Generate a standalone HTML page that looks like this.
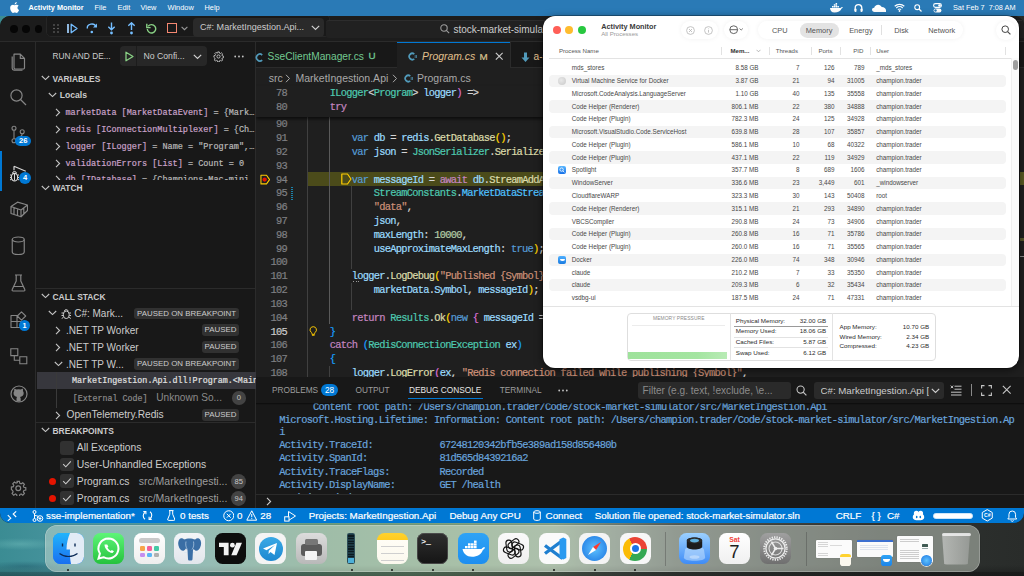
<!DOCTYPE html>
<html><head><meta charset="utf-8">
<style>
*{margin:0;padding:0;box-sizing:border-box}
html,body{width:1024px;height:576px;overflow:hidden;background:#3a4a48;font-family:"Liberation Sans",sans-serif}
.a{position:absolute}
.mono{font-family:"Liberation Mono",monospace;-webkit-text-stroke:0.2px}
.nw{white-space:nowrap}
#desk{left:0;top:0;width:1024px;height:576px;background:radial-gradient(ellipse 40px 6px at 20px 544px,rgba(130,205,200,.35),rgba(130,205,200,0)),radial-gradient(ellipse 45px 5px at 25px 566px,rgba(20,70,90,.35),rgba(20,70,90,0)),linear-gradient(180deg,rgba(0,0,0,0) 0,rgba(0,0,0,0) 565px,rgba(0,0,0,.3) 576px),linear-gradient(90deg,#3b8c93 0%,#4a95a0 8%,#5a9a98 20%,#6c9c80 32%,#7da080 45%,#86a086 54%,#6f7e73 60%,#545c57 66%,#414643 75%,#2f3331 86%,#292c2a 100%)}
#menubar{left:0;top:0;width:1024px;height:16px;background:#2a7ab6;color:#fff;font-size:8.6px;font-weight:bold}
#vsc{left:0;top:16.2px;width:1023.5px;height:507.1px;background:#181818;border-radius:10px;overflow:hidden}
#title{left:0;top:0;width:1024px;height:26px;background:#1c1c1c;border-bottom:1px solid #2b2b2b}
#act{left:0;top:26px;width:36px;height:466px;background:#181818;border-right:1px solid #2b2b2b}
#side{left:36px;top:26px;width:220px;height:466px;background:#181818;border-right:1px solid #2b2b2b}
#tabs{left:256px;top:26px;width:768px;height:26px;background:#181818;border-bottom:1px solid #2b2b2b}
#editor{left:256px;top:52px;width:768px;height:308.5px;background:#1f1f1f;overflow:hidden}
#panel{left:256px;top:360.5px;width:768px;height:131.2px;background:#181818;overflow:hidden}
#status{left:0;top:491.7px;width:1024px;height:15.6px;background:#0078d4;color:#fff}
#am{left:543.2px;top:16.2px;width:476.3px;height:351.6px;background:#fff;border-radius:12px;overflow:hidden;box-shadow:0 0 0 .5px rgba(0,0,0,.6),0 2px 8px rgba(0,0,0,.55)}
#dock{left:44.5px;top:525px;width:935px;height:46.5px;border-radius:12px;background:rgba(222,230,218,.45);box-shadow:inset 0 0 0 .7px rgba(255,255,255,.3),0 0 0 .5px rgba(0,0,0,.1)}

</style></head><body>
<div id="desk" class="a"></div>
<div class="a" style="left:0;top:571.5px;width:1024px;height:5px;background:linear-gradient(90deg,rgba(20,50,55,.25) 0%,rgba(40,55,45,.35) 40%,rgba(25,28,26,.55) 58%,rgba(20,20,20,.5) 100%)"></div>
<div id="menubar" class="a">
  <svg class="a" style="left:10px;top:2px" width="9" height="11" viewBox="0 0 17 20"><path fill="#fff" d="M14.1 10.6c0-2.6 2.1-3.8 2.2-3.9-1.2-1.8-3.1-2-3.7-2-1.6-.2-3.1.9-3.9.9-.8 0-2-.9-3.3-.9C3.7 4.8 2.1 5.8 1.2 7.300-.6 10.400.7 15 2.500 17.600c.9 1.300 1.900 2.700 3.300 2.600 1.300-.1 1.800-.8 3.400-.8s2 .8 3.400.8c1.400 0 2.300-1.300 3.100-2.600 1-1.500 1.400-2.900 1.400-3-.1 0-2.900-1.100-3-4zM11.600 3c.7-.9 1.200-2.100 1.100-3.300-1 .1-2.300.7-3 1.600-.7.800-1.200 2-1.100 3.200 1.100.1 2.300-.6 3-1.500z"/></svg>
  <div class="a nw" style="left:28.5px;top:3px;font-size:7.3px;font-weight:bold">Activity Monitor</div>
  <div class="a nw" style="left:94.5px;top:3px;font-size:7.4px;font-weight:normal">File</div>
  <div class="a nw" style="left:117.5px;top:3px;font-size:7.4px;font-weight:normal">Edit</div>
  <div class="a nw" style="left:140.5px;top:3px;font-size:7.4px;font-weight:normal">View</div>
  <div class="a nw" style="left:167.5px;top:3px;font-size:7.4px;font-weight:normal">Window</div>
  <div class="a nw" style="left:204.5px;top:3px;font-size:7.4px;font-weight:normal">Help</div>
  <svg class="a" style="left:829px;top:3px" width="14" height="10" viewBox="0 0 14 10"><path fill="#fff" d="M1 5h10.5c.6-.9 1.600-1.200 2.300-1-.1.8-.6 1.300-1.200 1.500C11.600 8.300 9 9.600 5.500 9.600 2.500 9.600 1.200 7.600 1 5zM3 3h1.5v1.5H3zM4.8 3h1.5v1.5H4.8zM6.6 3h1.5v1.5H6.6zM4.8 1.2h1.5v1.5H4.8zM6.6 1.2h1.5v1.5H6.6zM6.6 -.6h1.5V1H6.6zM8.4 3h1.5v1.5H8.4z"/></svg>
  <svg class="a" style="left:854px;top:3px" width="9" height="10" viewBox="0 0 9 10"><path fill="none" stroke="#fff" stroke-width="1.3" d="M1.2 8V5a3.3 3.3 0 0 1 6.6 0v3"/><rect x="0.5" y="5.5" width="2" height="3.5" rx=".8" fill="#fff"/><rect x="6.5" y="5.5" width="2" height="3.5" rx=".8" fill="#fff"/></svg>
  <svg class="a" style="left:872px;top:4px" width="14" height="8" viewBox="0 0 14 8"><path fill="#fff" d="M2.5 8C1 8 0 7 0 5.8 0 4.600 1 3.700 2.200 3.800 2.600 2 4.200.7 6.200.7c1.600 0 3 1 3.500 2.400C11.900 3 14 4.500 14 6.300V8z"/></svg>
  <svg class="a" style="left:894px;top:3px" width="11" height="9" viewBox="0 0 11 9"><path fill="none" stroke="#fff" stroke-width="1.2" d="M.7 3.300a7 7 0 0 1 9.600 0M2.300 5a4.600 4.600 0 0 1 6.400 0M3.900 6.700a2.200 2.200 0 0 1 3.200 0"/><circle cx="5.5" cy="8" r=".9" fill="#fff"/></svg>
  <svg class="a" style="left:914px;top:4px" width="8" height="8" viewBox="0 0 8 8"><circle cx="3.2" cy="3.2" r="2.4" fill="none" stroke="#fff" stroke-width="1.1"/><path d="M5 5l2.500 2.500" stroke="#fff" stroke-width="1.2"/></svg>
  <svg class="a" style="left:933px;top:3px" width="9" height="10" viewBox="0 0 9 10"><rect x=".6" y=".6" width="7.8" height="3.800" rx="1.900" fill="none" stroke="#fff" stroke-width="1.100"/><circle cx="6.500" cy="2.500" r="1.300" fill="#fff"/><rect x=".6" y="5.600" width="7.800" height="3.800" rx="1.900" fill="#fff"/><circle cx="2.500" cy="7.500" r="1.200" fill="#2a7ab6"/></svg>
  <div class="a nw" style="left:953px;top:3px;font-size:7.3px;font-weight:normal">Sat Feb 7&nbsp;&nbsp;7:08 AM</div>
</div>

<div id="vsc" class="a">
<div id="title" class="a">
  <div class="a" style="left:9.8px;top:9.2px;width:7.8px;height:7.8px;border-radius:50%;background:#060606"></div>
  <div class="a" style="left:22px;top:9.2px;width:7.8px;height:7.8px;border-radius:50%;background:#060606"></div>
  <div class="a" style="left:34.5px;top:9.2px;width:7.8px;height:7.8px;border-radius:50%;background:#060606"></div>
  <div class="a" style="left:46px;top:-2px;width:284px;height:23px;border-radius:5px;background:#191919;border:1px solid #262626"></div>
  <svg class="a" style="left:53px;top:8px" width="6" height="9" viewBox="0 0 6 9"><g fill="#8a8a8a"><circle cx="1" cy="1" r=".7"/><circle cx="5" cy="1" r=".7"/><circle cx="1" cy="4.5" r=".7"/><circle cx="5" cy="4.5" r=".7"/><circle cx="1" cy="8" r=".7"/><circle cx="5" cy="8" r=".7"/></g></svg>
  <svg class="a" style="left:66px;top:6.5px" width="12" height="11" viewBox="0 0 12 11"><rect x="1" y="1" width="2" height="9" fill="#8fb8df"/><path d="M5.2 1.2v8.6L11 5.5z" fill="none" stroke="#75beff" stroke-width="1.3" stroke-linejoin="round"/></svg>
  <svg class="a" style="left:86px;top:6px" width="12" height="12" viewBox="0 0 12 12"><path d="M1.3 6.5a4.5 4 0 0 1 8.700-1.800" fill="none" stroke="#75beff" stroke-width="1.4"/><path d="M11 1.5v4H7z" fill="#75beff"/><circle cx="5.8" cy="10" r="1.3" fill="#75beff"/></svg>
  <svg class="a" style="left:107px;top:5.5px" width="9" height="13" viewBox="0 0 9 13"><path d="M4.5 .5v7M1.300 4.800l3.200 3 3.200-3" fill="none" stroke="#75beff" stroke-width="1.4"/><circle cx="4.5" cy="11" r="1.4" fill="#75beff"/></svg>
  <svg class="a" style="left:127px;top:5.5px" width="9" height="13" viewBox="0 0 9 13"><path d="M4.5 8V1M1.300 3.800l3.200-3 3.200 3" fill="none" stroke="#75beff" stroke-width="1.4"/><circle cx="4.5" cy="11" r="1.4" fill="#75beff"/></svg>
  <svg class="a" style="left:145.5px;top:6.5px" width="11" height="11" viewBox="0 0 11 11"><path d="M2.200 3.200A4.200 4.200 0 1 1 1.300 6" fill="none" stroke="#89d185" stroke-width="1.4"/><path d="M.8 .8v3.800h3.800" fill="none" stroke="#89d185" stroke-width="1.4"/></svg>
  <div class="a" style="left:167px;top:7px;width:9.5px;height:9.5px;border:1.4px solid #f48771"></div>
  <svg class="a" style="left:180.5px;top:10px" width="7" height="5" viewBox="0 0 7 5"><path d="M.6 .8l2.900 2.900L6.400 .8" fill="none" stroke="#9a9a9a" stroke-width="1.1"/></svg>
  <div class="a" style="left:193px;top:2px;width:131px;height:18.5px;border-radius:4px;background:#2a2a2a"></div>
  <div class="a nw" style="left:200px;top:6px;font-size:9.05px;color:#cccccc">C#: MarketIngestion.Api...</div>
  <svg class="a" style="left:310.5px;top:8.5px" width="9" height="6" viewBox="0 0 9 6"><path d="M.8 .8l3.700 3.700L8.200 .8" fill="none" stroke="#cccccc" stroke-width="1.2"/></svg>
  
  <div class="a" style="left:326px;top:3.8px;width:700px;height:18.2px;background:#212121;border-top:1px solid #2d2d2d;border-radius:3px 0 0 3px"></div>
  <svg class="a" style="left:439.5px;top:7.5px" width="10" height="10" viewBox="0 0 10 10"><circle cx="4" cy="4" r="3.200" fill="none" stroke="#9d9d9d" stroke-width="1.1"/><path d="M6.300 6.300L9.200 9.200" stroke="#9d9d9d" stroke-width="1.1"/></svg>
  <div class="a nw" style="left:453.5px;top:7.4px;font-size:10px;color:#cccccc">stock-market-simulator</div>
</div>
  <div id="act" class="a">
  <svg class="a" style="left:10px;top:10px" width="17" height="19" viewBox="0 0 17 19"><path d="M4 2.2h6.300l4.200 4.200v9.300a1.300 1.300 0 0 1-1.300 1.300H5.300A1.300 1.300 0 0 1 4 15.700z M10.300 2.200v4.200h4.200" fill="none" stroke="#858585" stroke-width="1.2" stroke-linejoin="round"/><path d="M2.200 4.500v11.800a1.800 1.800 0 0 0 1.800 1.800h8.500" fill="none" stroke="#858585" stroke-width="1.2"/></svg>
  <svg class="a" style="left:9px;top:46px" width="18" height="18" viewBox="0 0 18 18"><circle cx="7.5" cy="7.5" r="5.600" fill="none" stroke="#858585" stroke-width="1.2"/><path d="M11.500 11.500l5.500 5.500" stroke="#858585" stroke-width="1.3"/></svg>
  <svg class="a" style="left:10px;top:82px" width="16" height="20" viewBox="0 0 16 20"><circle cx="4" cy="4.200" r="2" fill="none" stroke="#858585" stroke-width="1.1"/><circle cx="12.200" cy="7.700" r="2" fill="none" stroke="#858585" stroke-width="1.1"/><circle cx="4" cy="16.700" r="2" fill="none" stroke="#858585" stroke-width="1.1"/><path d="M4 6.200v8.500M12.200 9.700c0 3-3 4-7 5.500" fill="none" stroke="#858585" stroke-width="1.1"/></svg>
  <div class="a" style="left:15.3px;top:93.80000000000001px;width:16px;height:10.5px;border-radius:5.3px;background:#0078d4;color:#fff;font-size:7.6px;font-weight:bold;text-align:center;line-height:10.5px">26</div>
  <div class="a" style="left:0;top:108.5px;width:2px;height:40px;background:#0078d4"></div>
  <svg class="a" style="left:8.5px;top:122.5px" width="20" height="18" viewBox="0 0 20 18"><path d="M5 1.200v4M5 1.200l11.800 5" fill="none" stroke="#d7d7d7" stroke-width="1.2"/><ellipse cx="5.500" cy="12.200" rx="3.200" ry="3.800" fill="none" stroke="#d7d7d7" stroke-width="1.2"/><path d="M3.500 8.500a2 2 0 0 1 4 0M1 10h1.500M1 12.500h1.300M1 15l1.500-1M10 10H8.500M10 12.500H8.700M10 15l-1.500-1M5.500 9v6.500" fill="none" stroke="#d7d7d7" stroke-width="1"/></svg>
  <div class="a" style="left:19px;top:130.2px;width:12px;height:12px;border-radius:50%;background:#0078d4;color:#fff;font-size:7.6px;font-weight:bold;text-align:center;line-height:12px">4</div>
  <svg class="a" style="left:9.5px;top:158.5px" width="18.5" height="17" viewBox="0 0 18.500 17"><path d="M1 5.500L7.500 1.200 17.500 4 17.500 9.500 11 15.800 1 12.500z M1 5.500l10 3.500 6.500-5M11 9v6.800 M4 6.500v7 M7.500 7.700v7 M13.800 7v6.500" fill="none" stroke="#858585" stroke-width="1.2" stroke-linejoin="round"/></svg>
  <svg class="a" style="left:11px;top:194px" width="14.5" height="19.5" viewBox="0 0 14.500 19.500"><ellipse cx="7.250" cy="3.500" rx="6" ry="2.500" fill="none" stroke="#858585" stroke-width="1.200"/><path d="M1.250 3.500v12.500c0 1.400 2.700 2.500 6 2.500s6-1.100 6-2.500V3.500" fill="none" stroke="#858585" stroke-width="1.200"/></svg>
  <svg class="a" style="left:11px;top:231.5px" width="15" height="18" viewBox="0 0 15 18"><path d="M4 1h7M5.200 1v6L1.200 15.500a1 1 0 0 0 .9 1.500h10.800a1 1 0 0 0 .9-1.500L9.800 7V1M3 12.500h9" fill="none" stroke="#858585" stroke-width="1.200" stroke-linejoin="round"/></svg>
  <svg class="a" style="left:10px;top:269px" width="17" height="17" viewBox="0 0 17 17"><path d="M1 4.500h6v6H1z M1 10.500h6v6H1z M7 10.500h6v6H7z M11.500 .800l4.200 4.200-4.200 4.200-4.200-4.200z" fill="none" stroke="#858585" stroke-width="1.100" stroke-linejoin="round"/></svg>
  <div class="a" style="left:19px;top:278.3px;width:11px;height:11px;border-radius:50%;background:#0078d4;color:#fff;font-size:7.2px;font-weight:bold;text-align:center;line-height:11px">1</div>
  <svg class="a" style="left:10px;top:306px" width="17.5" height="17" viewBox="0 0 17.500 17"><path d="M.8 .8h7v6.800h-7z M9.800 8.800h7v7h-7z M4.300 7.600v4.700h5.500" fill="none" stroke="#858585" stroke-width="1.100"/></svg>
  <svg class="a" style="left:9.5px;top:342.5px" width="18" height="18" viewBox="0 0 18 18"><circle cx="9" cy="9" r="8" fill="none" stroke="#858585" stroke-width="1.200"/><path d="M6.500 16.500v-3c0-.8.3-1.300.7-1.600-2.200-.3-3.700-1.200-3.700-3.800 0-.9.300-1.600.8-2.200-.1-.3-.3-1.100.1-2.200 0 0 .7-.2 2.200.8a7.500 7.500 0 0 1 4 0c1.500-1 2.200-.8 2.200-.8.400 1.100.200 1.900.1 2.200.5.600.8 1.300.8 2.200 0 2.600-1.500 3.500-3.700 3.800.4.300.7.900.7 1.700v2.900" fill="#858585"/></svg>
  <svg class="a" style="left:10px;top:437.5px" width="16.5" height="16.5" viewBox="0 0 24 24"><path fill="none" stroke="#858585" stroke-width="1.700" d="M10.300 2h3.400l.6 2.800 1.900.8 2.400-1.600 2.400 2.400-1.600 2.400.8 1.900 2.800.6v3.400l-2.800.6-.8 1.900 1.600 2.400-2.400 2.400-2.400-1.600-1.900.8-.6 2.800h-3.400l-.6-2.800-1.900-.8-2.400 1.600-2.400-2.400 1.600-2.400-.8-1.900L2 13.700v-3.400l2.800-.6.8-1.900L4 5.400 6.400 3l2.400 1.600 1.900-.8z"/><circle cx="12" cy="12" r="3.500" fill="none" stroke="#858585" stroke-width="1.700"/></svg>
</div>
  <div id="side" class="a">
<div class="a nw" style="left:16.50px;top:9.26px;font-size:8.3px;color:#cccccc;">RUN AND DE...</div>
<div class="a" style="left:84.00px;top:4.00px;width:87px;height:20px;border-radius:4px;background:#272727"></div>
<div class="a" style="left:100.00px;top:4.00px;width:1px;height:20px;background:#1c1c1c"></div>
<svg class="a" style="left:88.50px;top:9.00px" width="9" height="11" viewBox="0 0 9 11"><path d="M1 1.2v8.6L8 5.5z" fill="none" stroke="#89d185" stroke-width="1.3" stroke-linejoin="round"/></svg>
<div class="a nw" style="left:107.50px;top:9.04px;font-size:8.7px;color:#cccccc;">No Confi...</div>
<svg class="a" style="left:156.50px;top:11.50px" width="9" height="6" viewBox="0 0 9 6"><path d="M.8 .8l3.7 3.7L8.2 .8" fill="none" stroke="#cccccc" stroke-width="1.2"/></svg>
<svg class="a" style="left:177.00px;top:8.50px" width="11" height="11" viewBox="0 0 24 24"><path fill="none" stroke="#c5c5c5" stroke-width="2" d="M10.3 2h3.4l.6 2.8 1.9.8 2.4-1.6 2.4 2.4-1.6 2.4.8 1.9 2.8.6v3.4l-2.8.6-.8 1.9 1.6 2.4-2.4 2.4-2.4-1.6-1.9.8-.6 2.8h-3.4l-.6-2.8-1.9-.8-2.4 1.6-2.4-2.4 1.6-2.4-.8-1.9L2 13.7v-3.4l2.8-.6.8-1.9L4 5.4 6.4 3l2.4 1.6 1.9-.8z"/><circle cx="12" cy="12" r="3.5" fill="none" stroke="#c5c5c5" stroke-width="2"/></svg>
<svg class="a" style="left:197.50px;top:13.00px" width="10" height="3" viewBox="0 0 10 3"><g fill="#c5c5c5"><circle cx="1.2" cy="1.5" r=".9"/><circle cx="5" cy="1.5" r=".9"/><circle cx="8.8" cy="1.5" r=".9"/></g></svg>
<svg class="a" style="left:5.00px;top:33.00px" width="9" height="6" viewBox="0 0 9 6"><path d="M.8 1l3.7 3.6L8.2 1" fill="none" stroke="#c5c5c5" stroke-width="1.1"/></svg>
<div class="a nw" style="left:16.50px;top:31.41px;font-size:8.4px;color:#cccccc;font-weight:bold">VARIABLES</div>
<svg class="a" style="left:12.00px;top:49.60px" width="9" height="6" viewBox="0 0 9 6"><path d="M.8 1l3.7 3.6L8.2 1" fill="none" stroke="#c5c5c5" stroke-width="1.1"/></svg>
<div class="a nw" style="left:23.80px;top:47.90px;font-size:8.6px;color:#cccccc;font-weight:bold">Locals</div>
<svg class="a" style="left:19.00px;top:66.20px" width="6" height="9" viewBox="0 0 6 9"><path d="M1 .8l3.6 3.7L1 8.2" fill="none" stroke="#c5c5c5" stroke-width="1.1"/></svg>
<div class="a nw mono" style="left:29.50px;top:66.10px;font-size:8.5px;color:#b8b8b8;"><span style="color:#c9a2c9">marketData [MarketDataEvent]</span> = {Mark…</div>
<svg class="a" style="left:19.00px;top:83.00px" width="6" height="9" viewBox="0 0 6 9"><path d="M1 .8l3.6 3.7L1 8.2" fill="none" stroke="#c5c5c5" stroke-width="1.1"/></svg>
<div class="a nw mono" style="left:29.50px;top:82.90px;font-size:8.5px;color:#b8b8b8;"><span style="color:#c9a2c9">redis [IConnectionMultiplexer]</span> = {Ch…</div>
<svg class="a" style="left:19.00px;top:99.80px" width="6" height="9" viewBox="0 0 6 9"><path d="M1 .8l3.6 3.7L1 8.2" fill="none" stroke="#c5c5c5" stroke-width="1.1"/></svg>
<div class="a nw mono" style="left:29.50px;top:99.70px;font-size:8.5px;color:#b8b8b8;"><span style="color:#c9a2c9">logger [ILogger]</span> = Name = "Program",…</div>
<svg class="a" style="left:19.00px;top:116.50px" width="6" height="9" viewBox="0 0 6 9"><path d="M1 .8l3.6 3.7L1 8.2" fill="none" stroke="#c5c5c5" stroke-width="1.1"/></svg>
<div class="a nw mono" style="left:29.50px;top:116.40px;font-size:8.5px;color:#b8b8b8;"><span style="color:#c9a2c9">validationErrors [List]</span> = Count = 0</div>
<svg class="a" style="left:19.00px;top:133.20px" width="6" height="9" viewBox="0 0 6 9"><path d="M1 .8l3.6 3.7L1 8.2" fill="none" stroke="#c5c5c5" stroke-width="1.1"/></svg>
<div class="a nw mono" style="left:29.50px;top:133.10px;font-size:8.5px;color:#b8b8b8;"><span style="color:#c9a2c9">db [IDatabase]</span> = {Champions-Mac-mini…</div>
<div class="a" style="left:0.00px;top:137.60px;width:219px;height:17px;background:#181818"></div>
<svg class="a" style="left:5.00px;top:142.50px" width="9" height="6" viewBox="0 0 9 6"><path d="M.8 1l3.7 3.6L8.2 1" fill="none" stroke="#c5c5c5" stroke-width="1.1"/></svg>
<div class="a nw" style="left:16.50px;top:140.91px;font-size:8.4px;color:#cccccc;font-weight:bold">WATCH</div>
<div class="a" style="left:0.00px;top:246.00px;width:220px;height:1px;background:#2b2b2b"></div>
<svg class="a" style="left:5.00px;top:251.20px" width="9" height="6" viewBox="0 0 9 6"><path d="M.8 1l3.7 3.6L8.2 1" fill="none" stroke="#c5c5c5" stroke-width="1.1"/></svg>
<div class="a nw" style="left:16.50px;top:249.58px;font-size:8.44px;color:#cccccc;font-weight:bold">CALL STACK</div>
<svg class="a" style="left:12.00px;top:268.30px" width="9" height="6" viewBox="0 0 9 6"><path d="M.8 1l3.7 3.6L8.2 1" fill="none" stroke="#c5c5c5" stroke-width="1.1"/></svg>
<svg class="a" style="left:24.50px;top:265.50px" width="10.5" height="11.5" viewBox="0 0 10.5 11.5"><ellipse cx="5.25" cy="6.8" rx="3" ry="3.8" fill="none" stroke="#cccccc" stroke-width="1"/><path d="M3.3 3.2a2 2 0 0 1 3.9 0M.5 5h1.8M.5 7.5h1.7M.7 10.5l1.7-1.2M10 5H8.2M10 7.5H8.3M9.8 10.5L8.1 9.3" fill="none" stroke="#cccccc" stroke-width="1"/></svg>
<div class="a nw" style="left:38.20px;top:265.83px;font-size:10px;color:#cccccc;">C#: Mark...</div>
<div class="a nw" style="left:98.20px;top:265.40px;width:104.8px;height:11.8px;border-radius:3px;background:#313131;color:#cccccc;font-size:7.9px;text-align:center;line-height:12.4px">PAUSED ON BREAKPOINT</div>
<svg class="a" style="left:19.00px;top:284.00px" width="6" height="9" viewBox="0 0 6 9"><path d="M1 .8l3.6 3.7L1 8.2" fill="none" stroke="#c5c5c5" stroke-width="1.1"/></svg>
<div class="a nw" style="left:30.00px;top:282.53px;font-size:10px;color:#cccccc;">.NET TP Worker</div>
<div class="a nw" style="left:166.00px;top:282.10px;width:37.0px;height:11.8px;border-radius:3px;background:#313131;color:#cccccc;font-size:7.9px;text-align:center;line-height:12.4px">PAUSED</div>
<svg class="a" style="left:19.00px;top:301.20px" width="6" height="9" viewBox="0 0 6 9"><path d="M1 .8l3.6 3.7L1 8.2" fill="none" stroke="#c5c5c5" stroke-width="1.1"/></svg>
<div class="a nw" style="left:30.00px;top:299.73px;font-size:10px;color:#cccccc;">.NET TP Worker</div>
<div class="a nw" style="left:166.00px;top:299.30px;width:37.0px;height:11.8px;border-radius:3px;background:#313131;color:#cccccc;font-size:7.9px;text-align:center;line-height:12.4px">PAUSED</div>
<svg class="a" style="left:17.50px;top:318.80px" width="9" height="6" viewBox="0 0 9 6"><path d="M.8 1l3.7 3.6L8.2 1" fill="none" stroke="#c5c5c5" stroke-width="1.1"/></svg>
<div class="a nw" style="left:30.00px;top:316.33px;font-size:10px;color:#cccccc;">.NET TP W...</div>
<div class="a nw" style="left:98.20px;top:315.90px;width:104.8px;height:11.8px;border-radius:3px;background:#313131;color:#cccccc;font-size:7.9px;text-align:center;line-height:12.4px">PAUSED ON BREAKPOINT</div>
<div class="a" style="left:1.00px;top:330.00px;width:219px;height:16.5px;background:#37373d"></div>
<div class="a" style="left:20.00px;top:330.00px;width:1px;height:36px;background:#3a3a3a"></div>
<div class="a nw mono" style="left:36.00px;top:334.26px;font-size:8.4px;color:#e0e0e0;">MarketIngestion.Api.dll!Program.&lt;Main&gt;$</div>
<div class="a nw mono" style="left:36.70px;top:351.32px;font-size:8.3px;color:#8b8b8b;">[External Code]</div>
<div class="a nw" style="left:120.30px;top:350.28px;font-size:10.1px;color:#8b8b8b;">Unknown So...</div>
<div class="a nw" style="left:196.00px;top:349.00px;width:13.6px;height:13.6px;border-radius:50%;background:#434343;color:#c8c8c8;font-size:7.6px;text-align:center;line-height:14.2px">0</div>
<svg class="a" style="left:19.00px;top:368.50px" width="6" height="9" viewBox="0 0 6 9"><path d="M1 .8l3.6 3.7L1 8.2" fill="none" stroke="#c5c5c5" stroke-width="1.1"/></svg>
<div class="a nw" style="left:30.50px;top:366.92px;font-size:10.2px;color:#cccccc;">OpenTelemetry.Redis</div>
<div class="a nw" style="left:166.00px;top:366.60px;width:37.0px;height:11.8px;border-radius:3px;background:#313131;color:#cccccc;font-size:7.9px;text-align:center;line-height:12.4px">PAUSED</div>
<div class="a" style="left:0.00px;top:379.50px;width:220px;height:1px;background:#2b2b2b"></div>
<svg class="a" style="left:5.00px;top:385.30px" width="9" height="6" viewBox="0 0 9 6"><path d="M.8 1l3.7 3.6L8.2 1" fill="none" stroke="#c5c5c5" stroke-width="1.1"/></svg>
<div class="a nw" style="left:16.50px;top:383.68px;font-size:8.44px;color:#cccccc;font-weight:bold">BREAKPOINTS</div>
<div class="a" style="left:24.00px;top:398.70px;width:13.8px;height:13.8px;border-radius:3px;background:#313131"></div>
<div class="a nw" style="left:40.80px;top:399.87px;font-size:10.3px;color:#cccccc;">All Exceptions</div>
<div class="a" style="left:24.00px;top:415.40px;width:13.8px;height:13.8px;border-radius:3px;background:#313131"></div>
<svg class="a" style="left:26.00px;top:417.20px" width="10" height="10" viewBox="0 0 10 10"><path d="M1.2 5.2l2.6 2.6L8.8 2.3" fill="none" stroke="#cccccc" stroke-width="1.1"/></svg>
<div class="a nw" style="left:40.80px;top:416.51px;font-size:10.4px;color:#cccccc;">User-Unhandled Exceptions</div>
<div class="a" style="left:13.00px;top:435.50px;width:7px;height:7px;border-radius:50%;background:#e51400"></div>
<div class="a" style="left:24.00px;top:432.20px;width:13.8px;height:13.8px;border-radius:3px;background:#313131"></div>
<svg class="a" style="left:26.00px;top:434.00px" width="10" height="10" viewBox="0 0 10 10"><path d="M1.2 5.2l2.6 2.6L8.8 2.3" fill="none" stroke="#cccccc" stroke-width="1.1"/></svg>
<div class="a nw" style="left:40.80px;top:433.37px;font-size:10.3px;color:#cccccc;">Program.cs</div>
<div class="a nw" style="left:102.70px;top:433.26px;font-size:10.5px;color:#9d9d9d;">src/MarketIngesti...</div>
<div class="a nw" style="left:195.40px;top:431.60px;width:14.8px;height:14.8px;border-radius:50%;background:#434343;color:#c8c8c8;font-size:7.6px;text-align:center;line-height:15.4px">85</div>
<div class="a" style="left:13.00px;top:452.50px;width:7px;height:7px;border-radius:50%;background:#e51400"></div>
<div class="a" style="left:24.00px;top:449.20px;width:13.8px;height:13.8px;border-radius:3px;background:#313131"></div>
<svg class="a" style="left:26.00px;top:451.00px" width="10" height="10" viewBox="0 0 10 10"><path d="M1.2 5.2l2.6 2.6L8.8 2.3" fill="none" stroke="#cccccc" stroke-width="1.1"/></svg>
<div class="a nw" style="left:40.80px;top:450.37px;font-size:10.3px;color:#cccccc;">Program.cs</div>
<div class="a nw" style="left:102.70px;top:450.26px;font-size:10.5px;color:#9d9d9d;">src/MarketIngesti...</div>
<div class="a nw" style="left:195.40px;top:448.60px;width:14.8px;height:14.8px;border-radius:50%;background:#434343;color:#c8c8c8;font-size:7.6px;text-align:center;line-height:15.4px">94</div>
</div>
<div id="tabs" class="a">
<svg class="a" style="left:-1.5px;top:10.5px" width="9" height="9" viewBox="0 0 9 9"><path d="M7.2 2A3.4 3.4 0 1 0 7.2 7" fill="none" stroke="#519aba" stroke-width="1.7"/></svg>
<div class="a nw" style="left:11.6px;top:8.9px;font-size:10.2px;color:#73c991">SseClientManager.cs</div>
<div class="a nw" style="left:112.5px;top:8.3px;font-size:9.8px;color:#73c991;-webkit-text-stroke:.3px">U</div>
<div class="a" style="left:140.5px;top:0.0px;width:1px;height:26px;background:#2b2b2b"></div>
<div class="a" style="left:141.0px;top:0.0px;width:113px;height:27px;background:#1f1f1f;border-top:1px solid #0078d4"></div>
<svg class="a" style="left:152px;top:10.3px" width="9" height="9" viewBox="0 0 9 9"><path d="M6.3 2.1A3.1 3.1 0 1 0 6.3 6.9" fill="none" stroke="#519aba" stroke-width="1.7"/><path d="M7.2 3v3M8.5 3v3" stroke="#519aba" stroke-width=".7"/></svg>
<div class="a nw" style="left:166.0px;top:8.9px;font-size:10.4px;color:#e2c08d;font-style:italic">Program.cs</div>
<div class="a nw" style="left:223.5px;top:8.7px;font-size:9.8px;color:#d9c28e;-webkit-text-stroke:.2px">M</div>
<svg class="a" style="left:238.5px;top:10.2px" width="8.5" height="8.5" viewBox="0 0 8 8"><path d="M.8 .8l6.4 6.4M7.2 .8L.8 7.2" stroke="#cccccc" stroke-width="1.1"/></svg>
<div class="a" style="left:253.5px;top:0.0px;width:1px;height:26px;background:#2b2b2b"></div>
<svg class="a" style="left:265.0px;top:9.5px" width="9" height="11" viewBox="0 0 9 11"><path d="M3 .5h3v5h2.5L4.5 10 .5 5.5H3z" fill="#519aba"/></svg>
<div class="a nw" style="left:277.5px;top:8.9px;font-size:10.2px;color:#e2c08d">a-simulator</div>
</div>
<div id="editor" class="a">
<div class="a nw" style="left:12.70px;top:4.20px;font-size:10.5px;color:#a9a9a9">src</div>
<svg class="a" style="left:29.00px;top:5.80px" width="6" height="9" viewBox="0 0 6 9"><path d="M1 .8l3.5 3.7L1 8.2" fill="none" stroke="#a9a9a9" stroke-width="1"/></svg>
<div class="a nw" style="left:39.50px;top:4.20px;font-size:10.5px;color:#a9a9a9">MarketIngestion.Api</div>
<svg class="a" style="left:136.00px;top:5.80px" width="6" height="9" viewBox="0 0 6 9"><path d="M1 .8l3.5 3.7L1 8.2" fill="none" stroke="#a9a9a9" stroke-width="1"/></svg>
<svg class="a" style="left:147.50px;top:6.00px" width="9" height="9" viewBox="0 0 9 9"><path d="M6.3 2.1A3.1 3.1 0 1 0 6.3 6.9" fill="none" stroke="#519aba" stroke-width="1.7"/><path d="M7.2 3v3M8.5 3v3" stroke="#519aba" stroke-width=".7"/></svg>
<div class="a nw" style="left:161.00px;top:4.20px;font-size:10.5px;color:#a9a9a9">Program.cs</div>
<div class="a" style="left:51.00px;top:104.08px;width:720px;height:13.8px;background:#4b4b1a"></div>
<div class="a" style="left:51.25px;top:48.80px;width:1px;height:262.6px;background:#404040"></div>
<div class="a" style="left:73.25px;top:48.80px;width:1px;height:207.3px;background:#5a5a5a"></div>
<div class="a" style="left:95.25px;top:117.90px;width:1px;height:82.9px;background:#404040"></div>
<div class="a" style="left:95.25px;top:214.64px;width:1px;height:27.6px;background:#404040"></div>
<div class="a" style="left:73.25px;top:297.56px;width:1px;height:13.8px;background:#404040"></div>
<div class="a nw mono" style="left:1.00px;top:50.10px;width:30px;text-align:right;font-size:10.4px;letter-spacing:-0.740px;color:#7f8084">90</div>
<div class="a nw mono" style="left:1.00px;top:63.92px;width:30px;text-align:right;font-size:10.4px;letter-spacing:-0.740px;color:#7f8084">91</div>
<div class="a nw mono" style="left:51.75px;top:63.92px;font-size:10.4px;letter-spacing:-0.740px;white-space:pre"><span style="color:#d4d4d4">        </span><span style="color:#569cd6">var</span><span style="color:#d4d4d4"> </span><span style="color:#9cdcfe">db</span><span style="color:#d4d4d4"> = </span><span style="color:#9cdcfe">redis</span><span style="color:#d4d4d4">.</span><span style="color:#dcdcaa">GetDatabase</span><span style="color:#ffd700">()</span><span style="color:#d4d4d4">;</span></div>
<div class="a nw mono" style="left:1.00px;top:77.74px;width:30px;text-align:right;font-size:10.4px;letter-spacing:-0.740px;color:#7f8084">92</div>
<div class="a nw mono" style="left:51.75px;top:77.74px;font-size:10.4px;letter-spacing:-0.740px;white-space:pre"><span style="color:#d4d4d4">        </span><span style="color:#569cd6">var</span><span style="color:#d4d4d4"> </span><span style="color:#9cdcfe">json</span><span style="color:#d4d4d4"> = </span><span style="color:#4ec9b0">JsonSerializer</span><span style="color:#d4d4d4">.</span><span style="color:#dcdcaa">Serialize</span><span style="color:#ffd700">(</span><span style="color:#9cdcfe">marketData</span><span style="color:#ffd700">)</span><span style="color:#d4d4d4">;</span></div>
<div class="a nw mono" style="left:1.00px;top:91.56px;width:30px;text-align:right;font-size:10.4px;letter-spacing:-0.740px;color:#7f8084">93</div>
<div class="a nw mono" style="left:1.00px;top:105.38px;width:30px;text-align:right;font-size:10.4px;letter-spacing:-0.740px;color:#7f8084">94</div>
<div class="a nw mono" style="left:51.75px;top:105.38px;font-size:10.4px;letter-spacing:-0.740px;white-space:pre"><span style="color:#d4d4d4">        </span><span style="color:#569cd6">var</span><span style="color:#d4d4d4"> </span><span style="color:#9cdcfe">messageId</span><span style="color:#d4d4d4"> = </span><span style="color:#c586c0">await</span><span style="color:#d4d4d4"> </span><span style="color:#9cdcfe">db</span><span style="color:#d4d4d4">.</span><span style="color:#dcdcaa">StreamAddAsync</span><span style="color:#ffd700">(</span></div>
<div class="a nw mono" style="left:1.00px;top:119.20px;width:30px;text-align:right;font-size:10.4px;letter-spacing:-0.740px;color:#7f8084">95</div>
<div class="a nw mono" style="left:51.75px;top:119.20px;font-size:10.4px;letter-spacing:-0.740px;white-space:pre"><span style="color:#d4d4d4">            </span><span style="color:#4ec9b0">StreamConstants</span><span style="color:#d4d4d4">.</span><span style="color:#4fc1ff">MarketDataStream</span><span style="color:#d4d4d4">,</span></div>
<div class="a nw mono" style="left:1.00px;top:133.02px;width:30px;text-align:right;font-size:10.4px;letter-spacing:-0.740px;color:#7f8084">96</div>
<div class="a nw mono" style="left:51.75px;top:133.02px;font-size:10.4px;letter-spacing:-0.740px;white-space:pre"><span style="color:#d4d4d4">            </span><span style="color:#ce9178">"data"</span><span style="color:#d4d4d4">,</span></div>
<div class="a nw mono" style="left:1.00px;top:146.84px;width:30px;text-align:right;font-size:10.4px;letter-spacing:-0.740px;color:#7f8084">97</div>
<div class="a nw mono" style="left:51.75px;top:146.84px;font-size:10.4px;letter-spacing:-0.740px;white-space:pre"><span style="color:#d4d4d4">            </span><span style="color:#9cdcfe">json</span><span style="color:#d4d4d4">,</span></div>
<div class="a nw mono" style="left:1.00px;top:160.66px;width:30px;text-align:right;font-size:10.4px;letter-spacing:-0.740px;color:#7f8084">98</div>
<div class="a nw mono" style="left:51.75px;top:160.66px;font-size:10.4px;letter-spacing:-0.740px;white-space:pre"><span style="color:#d4d4d4">            </span><span style="color:#9cdcfe">maxLength</span><span style="color:#d4d4d4">: </span><span style="color:#b5cea8">10000</span><span style="color:#d4d4d4">,</span></div>
<div class="a nw mono" style="left:1.00px;top:174.48px;width:30px;text-align:right;font-size:10.4px;letter-spacing:-0.740px;color:#7f8084">99</div>
<div class="a nw mono" style="left:51.75px;top:174.48px;font-size:10.4px;letter-spacing:-0.740px;white-space:pre"><span style="color:#d4d4d4">            </span><span style="color:#9cdcfe">useApproximateMaxLength</span><span style="color:#d4d4d4">: </span><span style="color:#569cd6">true</span><span style="color:#ffd700">)</span><span style="color:#d4d4d4">;</span></div>
<div class="a nw mono" style="left:1.00px;top:188.30px;width:30px;text-align:right;font-size:10.4px;letter-spacing:-0.740px;color:#7f8084">100</div>
<div class="a nw mono" style="left:1.00px;top:202.12px;width:30px;text-align:right;font-size:10.4px;letter-spacing:-0.740px;color:#7f8084">101</div>
<div class="a nw mono" style="left:51.75px;top:202.12px;font-size:10.4px;letter-spacing:-0.740px;white-space:pre"><span style="color:#d4d4d4">        </span><span style="color:#9cdcfe">logger</span><span style="color:#d4d4d4">.</span><span style="color:#dcdcaa">LogDebug</span><span style="color:#ffd700">(</span><span style="color:#ce9178">"Published {Symbol}"</span><span style="color:#d4d4d4">,</span></div>
<div class="a nw mono" style="left:1.00px;top:215.94px;width:30px;text-align:right;font-size:10.4px;letter-spacing:-0.740px;color:#7f8084">102</div>
<div class="a nw mono" style="left:51.75px;top:215.94px;font-size:10.4px;letter-spacing:-0.740px;white-space:pre"><span style="color:#d4d4d4">            </span><span style="color:#9cdcfe">marketData</span><span style="color:#d4d4d4">.</span><span style="color:#9cdcfe">Symbol</span><span style="color:#d4d4d4">, </span><span style="color:#9cdcfe">messageId</span><span style="color:#ffd700">)</span><span style="color:#d4d4d4">;</span></div>
<div class="a nw mono" style="left:1.00px;top:229.76px;width:30px;text-align:right;font-size:10.4px;letter-spacing:-0.740px;color:#7f8084">103</div>
<div class="a nw mono" style="left:1.00px;top:243.58px;width:30px;text-align:right;font-size:10.4px;letter-spacing:-0.740px;color:#7f8084">104</div>
<div class="a nw mono" style="left:51.75px;top:243.58px;font-size:10.4px;letter-spacing:-0.740px;white-space:pre"><span style="color:#d4d4d4">        </span><span style="color:#c586c0">return</span><span style="color:#d4d4d4"> </span><span style="color:#4ec9b0">Results</span><span style="color:#d4d4d4">.</span><span style="color:#dcdcaa">Ok</span><span style="color:#ffd700">(</span><span style="color:#569cd6">new</span><span style="color:#d4d4d4"> </span><span style="color:#da70d6">{</span><span style="color:#d4d4d4"> </span><span style="color:#9cdcfe">messageId</span><span style="color:#d4d4d4"> = messageId </span><span style="color:#da70d6">}</span><span style="color:#ffd700">)</span><span style="color:#d4d4d4">;</span></div>
<div class="a nw mono" style="left:1.00px;top:257.40px;width:30px;text-align:right;font-size:10.4px;letter-spacing:-0.740px;color:#cccccc">105</div>
<div class="a nw mono" style="left:51.75px;top:257.40px;font-size:10.4px;letter-spacing:-0.740px;white-space:pre"><span style="color:#d4d4d4">    </span><span style="color:#179fff">}</span></div>
<div class="a nw mono" style="left:1.00px;top:271.22px;width:30px;text-align:right;font-size:10.4px;letter-spacing:-0.740px;color:#7f8084">106</div>
<div class="a nw mono" style="left:51.75px;top:271.22px;font-size:10.4px;letter-spacing:-0.740px;white-space:pre"><span style="color:#d4d4d4">    </span><span style="color:#c586c0">catch</span><span style="color:#d4d4d4"> </span><span style="color:#179fff">(</span><span style="color:#4ec9b0">RedisConnectionException</span><span style="color:#d4d4d4"> </span><span style="color:#9cdcfe">ex</span><span style="color:#179fff">)</span></div>
<div class="a nw mono" style="left:1.00px;top:285.04px;width:30px;text-align:right;font-size:10.4px;letter-spacing:-0.740px;color:#7f8084">107</div>
<div class="a nw mono" style="left:51.75px;top:285.04px;font-size:10.4px;letter-spacing:-0.740px;white-space:pre"><span style="color:#d4d4d4">    </span><span style="color:#179fff">{</span></div>
<div class="a nw mono" style="left:1.00px;top:298.86px;width:30px;text-align:right;font-size:10.4px;letter-spacing:-0.740px;color:#7f8084">108</div>
<div class="a nw mono" style="left:51.75px;top:298.86px;font-size:10.4px;letter-spacing:-0.740px;white-space:pre"><span style="color:#d4d4d4">        </span><span style="color:#9cdcfe">logger</span><span style="color:#d4d4d4">.</span><span style="color:#dcdcaa">LogError</span><span style="color:#da70d6">(</span><span style="color:#9cdcfe">ex</span><span style="color:#d4d4d4">, </span><span style="color:#ce9178">"Redis connection failed while publishing {Symbol}"</span><span style="color:#d4d4d4">, </span></div>
<div class="a" style="left:0.00px;top:18.00px;width:768px;height:30.7px;background:#1f1f1f;box-shadow:0 2px 3px rgba(0,0,0,.6)"></div>
<div class="a nw mono" style="left:1.00px;top:19.00px;width:30px;text-align:right;font-size:10.4px;letter-spacing:-0.740px;color:#7f8084">78</div>
<div class="a nw mono" style="left:51.75px;top:19.00px;font-size:10.4px;letter-spacing:-0.740px;white-space:pre"><span style="color:#d4d4d4">    </span><span style="color:#4ec9b0">ILogger</span><span style="color:#d4d4d4">&lt;</span><span style="color:#4ec9b0">Program</span><span style="color:#d4d4d4">&gt;</span><span style="color:#d4d4d4"> </span><span style="color:#9cdcfe">logger</span><span style="color:#da70d6">)</span><span style="color:#d4d4d4"> =&gt;</span></div>
<div class="a nw mono" style="left:1.00px;top:32.80px;width:30px;text-align:right;font-size:10.4px;letter-spacing:-0.740px;color:#7f8084">80</div>
<div class="a nw mono" style="left:51.75px;top:32.80px;font-size:10.4px;letter-spacing:-0.740px;white-space:pre"><span style="color:#d4d4d4">    </span><span style="color:#c586c0">try</span></div>
<svg class="a" style="left:3.50px;top:105.38px" width="10.5" height="11.2" viewBox="0 0 12 13"><path d="M1 1.5h6.5L11 6.5 7.5 11.5H1z" fill="none" stroke="#ffcc00" stroke-width="1.25" stroke-linejoin="round"/><circle cx="5.3" cy="6.5" r="2.5" fill="#e51400"/></svg>
<svg class="a" style="left:84.50px;top:104.98px" width="11" height="12" viewBox="0 0 11 12"><path d="M.8 1h5.7L10 6 6.5 11H.8z" fill="none" stroke="#ffcc00" stroke-width="1.2" stroke-linejoin="round"/></svg>
<div class="a" style="left:35.00px;top:118.50px;width:2.2px;height:14px;background:repeating-linear-gradient(#1b81a8 0 1.1px,transparent 1.1px 2px)"></div>
<svg class="a" style="left:52.80px;top:257.80px" width="8.5" height="10.5" viewBox="0 0 9 12"><path d="M4.5 .8a3.6 3.6 0 0 0-2.2 6.5c.5.4.7.9.7 1.5v.7h3v-.7c0-.6.2-1.1.7-1.5A3.6 3.6 0 0 0 4.5.8zM3 10.6h3" fill="none" stroke="#ffcc00" stroke-width="1.1"/></svg>
<div class="a" style="left:97.00px;top:213.00px;width:7px;height:1px;background:repeating-linear-gradient(90deg,#9a9a9a 0 1px,transparent 1px 2.5px)"></div>
<div class="a" style="left:763.00px;top:0.00px;width:5px;height:310px;background:#1f1f1f"></div>
<div class="a" style="left:764.00px;top:104.00px;width:4px;height:13px;background:#5a5a22"></div>
<div class="a" style="left:764.00px;top:169.50px;width:4px;height:3px;background:#55552a"></div>
<div class="a" style="left:764.00px;top:188.00px;width:4px;height:1px;background:#8a8a8a"></div>
</div>
<div id="panel" class="a">
<div class="a nw" style="left:16.00px;top:8.30px;font-size:8.3px;color:#9d9d9d">PROBLEMS</div>
<div class="a nw" style="left:65.00px;top:7.30px;width:17px;height:12.4px;border-radius:6.1px;background:#0078d4;color:#fff;font-size:8.3px;text-align:center;line-height:12.2px">28</div>
<div class="a nw" style="left:99.50px;top:8.30px;font-size:8.3px;color:#9d9d9d">OUTPUT</div>
<div class="a nw" style="left:153.00px;top:8.30px;font-size:8.3px;color:#e7e7e7">DEBUG CONSOLE</div>
<div class="a" style="left:152.00px;top:21.00px;width:75px;height:1.2px;background:#0078d4"></div>
<div class="a nw" style="left:243.70px;top:8.30px;font-size:8.3px;color:#9d9d9d">TERMINAL</div>
<svg class="a" style="left:302.00px;top:12.50px" width="10" height="3" viewBox="0 0 10 3"><g fill="#c5c5c5"><circle cx="1.2" cy="1.5" r=".9"/><circle cx="5" cy="1.5" r=".9"/><circle cx="8.8" cy="1.5" r=".9"/></g></svg>
<div class="a" style="left:382.00px;top:5.20px;width:153px;height:17.5px;border-radius:3px;background:#2a2a2a"></div>
<div class="a nw" style="left:386.50px;top:8.50px;font-size:10.1px;color:#8a8a8a">Filter (e.g. text, !exclude, \e...</div>
<svg class="a" style="left:540.00px;top:8.00px" width="11" height="11" viewBox="0 0 11 11"><circle cx="4.6" cy="4.6" r="3.6" fill="none" stroke="#c5c5c5" stroke-width="1.1"/><path d="M7.2 7.2l3.2 3.2" stroke="#c5c5c5" stroke-width="1.2"/></svg>
<div class="a" style="left:558.00px;top:5.20px;width:130px;height:17.5px;border-radius:3px;background:#2a2a2a"></div>
<div class="a nw" style="left:564.50px;top:8.00px;width:108px;overflow:hidden;font-size:9.7px;color:#cccccc">C#: MarketIngestion.Api [h</div>
<svg class="a" style="left:674.50px;top:11.00px" width="9" height="6" viewBox="0 0 9 6"><path d="M.8 .8l3.7 3.7L8.2 .8" fill="none" stroke="#cccccc" stroke-width="1.2"/></svg>
<svg class="a" style="left:693.50px;top:8.00px" width="12" height="11" viewBox="0 0 12 11"><path d="M4.5 1.2h7M4.5 4.2h7M1 7.2h10.5M1 10h10.5M.8 .6l2.4 2.6M3.2 .6L.8 3.2" fill="none" stroke="#c5c5c5" stroke-width="1"/></svg>
<div class="a" style="left:715.20px;top:7.50px;width:1px;height:12px;background:#8a8a8a"></div>
<svg class="a" style="left:724.50px;top:8.00px" width="11" height="11" viewBox="0 0 11 11"><path d="M.6 3.5V.6h2.9M7.5.6h2.9v2.9M10.4 7.5v2.9H7.5M3.5 10.4H.6V7.5" fill="none" stroke="#c5c5c5" stroke-width="1.1"/></svg>
<svg class="a" style="left:745.50px;top:8.50px" width="9.5" height="9.5" viewBox="0 0 9 9"><path d="M.8 .8l7.4 7.4M8.2 .8L.8 8.2" stroke="#c5c5c5" stroke-width="1.1"/></svg>
<div class="a" style="left:0.00px;top:26.50px;width:768px;height:90.5px;overflow:hidden">
<div class="a nw mono" style="left:57.00px;top:-2.00px;font-size:10.4px;letter-spacing:-0.710px;white-space:pre;color:#69a4dc">Content root path: /Users/champion.trader/Code/stock-market-simulator/src/MarketIngestion.Api</div>
<div class="a nw mono" style="left:23.20px;top:10.60px;font-size:10.4px;letter-spacing:-0.710px;white-space:pre;color:#69a4dc">Microsoft.Hosting.Lifetime: Information: Content root path: /Users/champion.trader/Code/stock-market-simulator/src/MarketIngestion.Ap</div>
<div class="a nw mono" style="left:23.20px;top:23.00px;font-size:10.4px;letter-spacing:-0.710px;white-space:pre;color:#69a4dc">i</div>
<div class="a nw mono" style="left:23.20px;top:36.00px;font-size:10.4px;letter-spacing:-0.710px;white-space:pre;color:#69a4dc">Activity.TraceId:            67248120342bfb5e389ad158d856480b</div>
<div class="a nw mono" style="left:23.20px;top:49.30px;font-size:10.4px;letter-spacing:-0.710px;white-space:pre;color:#69a4dc">Activity.SpanId:             81d565d8439216a2</div>
<div class="a nw mono" style="left:23.20px;top:62.60px;font-size:10.4px;letter-spacing:-0.710px;white-space:pre;color:#69a4dc">Activity.TraceFlags:         Recorded</div>
<div class="a nw mono" style="left:23.20px;top:75.70px;font-size:10.4px;letter-spacing:-0.710px;white-space:pre;color:#69a4dc">Activity.DisplayName:        GET /health</div>
<div class="a nw mono" style="left:23.20px;top:88.90px;font-size:10.4px;letter-spacing:-0.710px;white-space:pre;color:#69a4dc">Activity.Kind:                Server</div>
</div>
<div class="a" style="left:0.00px;top:26.00px;width:768px;height:2.5px;background:linear-gradient(rgba(0,0,0,.55),rgba(0,0,0,0))"></div>
<div class="a" style="left:0.00px;top:117.00px;width:768px;height:15px;background:#181818;border-top:1px solid #2b2b2b"></div>
<svg class="a" style="left:10.00px;top:120.00px" width="6" height="9" viewBox="0 0 6 9"><path d="M1 .8l3.6 3.7L1 8.2" fill="none" stroke="#cccccc" stroke-width="1.1"/></svg>
</div>
<div id="status" class="a">
<svg class="a" style="left:7.00px;top:2.80px" width="10" height="10" viewBox="0 0 10 10"><path d="M.8 4.2l3 3-3 2.6M9.2 .4L6.2 3l3 3" fill="none" stroke="#fff" stroke-width="1.1"/></svg>
<svg class="a" style="left:31.50px;top:1.80px" width="12" height="12" viewBox="0 0 12 12"><circle cx="2.5" cy="2" r="1.5" fill="none" stroke="#fff" stroke-width="1"/><circle cx="2.5" cy="10" r="1.5" fill="none" stroke="#fff" stroke-width="1"/><path d="M2.5 3.5v5M2.5 5.5c3 0 4 1 4 2" fill="none" stroke="#fff" stroke-width="1"/><circle cx="8" cy="8.5" r="2.8" fill="none" stroke="#fff" stroke-width="1"/><path d="M8 7v3M6.5 8.5h3" stroke="#fff" stroke-width=".9"/></svg>
<div class="a nw" style="left:46.00px;top:1.84px;font-size:9.8px;color:#fff;-webkit-text-stroke:.2px">sse-implementation*</div>
<svg class="a" style="left:141.80px;top:2.30px" width="11" height="11" viewBox="0 0 11 11"><path d="M3.2 2.2A4.3 4.3 0 0 0 3 9.3M7.8 8.8A4.3 4.3 0 0 0 8 1.7" fill="none" stroke="#fff" stroke-width="1.1"/><path d="M1.3 1.6h2.6v2.6M9.7 9.4H7.1V6.8" fill="none" stroke="#fff" stroke-width="1.1"/></svg>
<svg class="a" style="left:166.50px;top:2.10px" width="8.5" height="11" viewBox="0 0 8.5 11"><path d="M2 .6h4.5M2.8.6v3.6L.8 9a1 1 0 0 0 .9 1.4h5.1a1 1 0 0 0 .9-1.4L5.7 4.2V.6" fill="none" stroke="#fff" stroke-width="1" stroke-linejoin="round"/></svg>
<div class="a nw" style="left:180.00px;top:1.84px;font-size:9.8px;color:#fff;-webkit-text-stroke:.2px">0 tests</div>
<svg class="a" style="left:222.60px;top:2.30px" width="11.5" height="11.5" viewBox="0 0 11.5 11.5"><circle cx="5.75" cy="5.75" r="5" fill="none" stroke="#fff" stroke-width="1"/><path d="M3.8 3.8l3.9 3.9M7.7 3.8L3.8 7.7" stroke="#fff" stroke-width="1"/></svg>
<div class="a nw" style="left:236.90px;top:1.84px;font-size:9.8px;color:#fff;-webkit-text-stroke:.2px">0</div>
<svg class="a" style="left:245.80px;top:2.10px" width="11.5" height="11" viewBox="0 0 11.5 11"><path d="M5.75.8L.8 10.2h9.9z" fill="none" stroke="#fff" stroke-width="1" stroke-linejoin="round"/><path d="M5.75 4v3.2M5.75 8.2v.9" stroke="#fff" stroke-width="1"/></svg>
<div class="a nw" style="left:260.30px;top:1.84px;font-size:9.8px;color:#fff;-webkit-text-stroke:.2px">28</div>
<svg class="a" style="left:283.50px;top:1.80px" width="12.5" height="12" viewBox="0 0 12.5 12"><path d="M4.5 1.5l7 4.5-7 4.5z" fill="none" stroke="#fff" stroke-width="1" stroke-linejoin="round"/><rect x=".7" y="6.8" width="4.3" height="4.3" fill="#0078d4" stroke="#fff" stroke-width="1"/></svg>
<div class="a nw" style="left:308.75px;top:1.84px;font-size:9.8px;color:#fff;-webkit-text-stroke:.2px">Projects: MarketIngestion.Api</div>
<div class="a nw" style="left:449.40px;top:1.84px;font-size:9.8px;color:#fff;-webkit-text-stroke:.2px">Debug Any CPU</div>
<svg class="a" style="left:533.00px;top:2.10px" width="8" height="11" viewBox="0 0 8 11"><ellipse cx="4" cy="2" rx="3.3" ry="1.3" fill="none" stroke="#fff" stroke-width="1"/><path d="M.7 2v7c0 .8 1.5 1.4 3.3 1.4S7.3 9.8 7.3 9V2" fill="none" stroke="#fff" stroke-width="1"/></svg>
<div class="a nw" style="left:545.60px;top:1.84px;font-size:9.8px;color:#fff;-webkit-text-stroke:.2px">Connect</div>
<div class="a nw" style="left:594.70px;top:1.84px;font-size:9.8px;color:#fff;-webkit-text-stroke:.2px">Solution file opened: stock-market-simulator.sln</div>
<div class="a nw" style="left:835.70px;top:1.84px;font-size:9.8px;color:#fff;-webkit-text-stroke:.2px">CRLF</div>
<div class="a nw" style="left:871.50px;top:1.84px;font-size:9.8px;color:#fff;-webkit-text-stroke:.2px">{ }</div>
<div class="a nw" style="left:887.00px;top:1.84px;font-size:9.8px;color:#fff;-webkit-text-stroke:.2px">C#</div>
<svg class="a" style="left:911.50px;top:2.10px" width="13" height="11" viewBox="0 0 13 11"><path d="M2 4.5C1.5 1.5 3 .8 4.5.8s2 1 2 1.8c0-.8.5-1.8 2-1.8S11.5 1.5 11 4.5c1 .6 1.2 1.5 1.2 3 0 2-2.5 2.8-5.7 2.8S.8 9.5.8 7.5c0-1.5.2-2.4 1.2-3z" fill="#fff"/><ellipse cx="4.7" cy="7" rx=".8" ry="1.2" fill="#0078d4"/><ellipse cx="8.3" cy="7" rx=".8" ry="1.2" fill="#0078d4"/></svg>
<div class="a" style="left:932.70px;top:5.30px;width:40px;height:5.5px;border-radius:2.8px;background:#fff;border:1px solid #cfe6f8"></div>
<svg class="a" style="left:980.50px;top:1.60px" width="12.5" height="12.5" viewBox="0 0 12.5 12.5"><path d="M6.25.6l5 2.9v5.6l-5 2.9-5-2.9V3.5z" fill="none" stroke="#fff" stroke-width="1"/><text x="6.25" y="8.3" font-size="5" font-family="Liberation Sans" font-weight="bold" fill="#fff" text-anchor="middle">C#</text></svg>
<svg class="a" style="left:1006.50px;top:1.80px" width="10.5" height="12" viewBox="0 0 10.5 12"><path d="M5.25 1a3.3 3.3 0 0 0-3.3 3.3v3L.8 9h8.9L8.55 7.3v-3A3.3 3.3 0 0 0 5.25 1zM4 10.4a1.3 1.3 0 0 0 2.5 0" fill="none" stroke="#fff" stroke-width="1"/></svg>
</div>
</div>
<div id="am" class="a">
<div class="a" style="left:10.00px;top:10.10px;width:7.8px;height:7.8px;border-radius:50%;background:#ff5f57"></div>
<div class="a" style="left:21.90px;top:10.10px;width:7.8px;height:7.8px;border-radius:50%;background:#febc2e"></div>
<div class="a" style="left:34.60px;top:10.10px;width:7.8px;height:7.8px;border-radius:50%;background:#28c840"></div>
<div class="a nw" style="left:58.00px;top:6.00px;font-size:7.3px;font-weight:bold;color:#3a3a3a">Activity Monitor</div>
<div class="a nw" style="left:58.00px;top:13.80px;font-size:6.1px;color:#9a9a9a">All Processes</div>
<div class="a" style="left:137.60px;top:5.30px;width:37px;height:17.8px;border-radius:9px;background:#fff;box-shadow:0 0 5px rgba(0,0,0,.06)"></div>
<svg class="a" style="left:142.50px;top:9.50px" width="9" height="9" viewBox="0 0 9 9"><circle cx="4.5" cy="4.5" r="3.9" fill="none" stroke="#b5b5b5" stroke-width=".8"/><path d="M3 3l3 3M6 3L3 6" stroke="#b5b5b5" stroke-width=".8"/></svg>
<svg class="a" style="left:161.20px;top:9.50px" width="9" height="9" viewBox="0 0 9 9"><circle cx="4.5" cy="4.5" r="3.9" fill="none" stroke="#b5b5b5" stroke-width=".8"/><path d="M4.5 4v2.6M4.5 2.5v.7" stroke="#b5b5b5" stroke-width=".8"/></svg>
<div class="a" style="left:181.00px;top:5.30px;width:24.2px;height:17.8px;border-radius:9px;background:#fff;box-shadow:0 0 5px rgba(0,0,0,.06)"></div>
<svg class="a" style="left:185.50px;top:9.30px" width="15" height="9.5" viewBox="0 0 15 9.5"><circle cx="4.7" cy="4.7" r="3.9" fill="none" stroke="#555" stroke-width=".9"/><path d="M.8 4.7h7.8" stroke="#555" stroke-width=".9"/><path d="M10.6 3.5l1.6 1.6 1.6-1.6" fill="none" stroke="#555" stroke-width=".8"/></svg>
<div class="a" style="left:214.80px;top:5.30px;width:205px;height:17.8px;border-radius:9px;background:#fff;box-shadow:0 0 5px rgba(0,0,0,.06)"></div>
<div class="a" style="left:256.70px;top:7.00px;width:39px;height:14.5px;border-radius:7.3px;background:#e3e3e3"></div>
<div class="a nw" style="left:228.70px;top:9.70px;font-size:7.4px;color:#555">CPU</div>
<div class="a nw" style="left:262.50px;top:9.70px;font-size:7.4px;color:#555">Memory</div>
<div class="a nw" style="left:306.00px;top:9.70px;font-size:7.4px;color:#555">Energy</div>
<div class="a nw" style="left:351.00px;top:9.70px;font-size:7.4px;color:#555">Disk</div>
<div class="a nw" style="left:385.00px;top:9.70px;font-size:7.4px;color:#555">Network</div>
<div class="a" style="left:337.40px;top:9.00px;width:.6px;height:10px;background:#e0e0e0"></div>
<div class="a" style="left:453.00px;top:4.50px;width:19.5px;height:19.5px;border-radius:50%;background:#fff;box-shadow:0 0 5px rgba(0,0,0,.06)"></div>
<svg class="a" style="left:457.50px;top:9.00px" width="10" height="10" viewBox="0 0 10 10"><circle cx="4.2" cy="4.2" r="3.3" fill="none" stroke="#444" stroke-width="1"/><path d="M6.6 6.6l2.8 2.8" stroke="#444" stroke-width="1.1"/></svg>
<div class="a nw" style="left:15.70px;top:30.60px;font-size:6.1px;color:#555">Process Name</div>
<div class="a nw" style="left:187.30px;top:30.60px;font-size:6.1px;color:#555;font-weight:bold;color:#333">Mem...</div>
<svg class="a" style="left:212.50px;top:33.30px" width="5" height="4" viewBox="0 0 5 4"><path d="M.5 .8l2 2 2-2" fill="none" stroke="#999" stroke-width=".7"/></svg>
<div class="a nw" style="left:232.50px;top:30.60px;font-size:6.1px;color:#555">Threads</div>
<div class="a nw" style="left:275.20px;top:30.60px;font-size:6.1px;color:#555">Ports</div>
<div class="a nw" style="left:310.00px;top:30.60px;font-size:6.1px;color:#555">PID</div>
<div class="a nw" style="left:333.00px;top:30.60px;font-size:6.1px;color:#555">User</div>
<div class="a" style="left:178.00px;top:31.00px;width:.6px;height:8px;background:#e2e2e2"></div>
<div class="a" style="left:225.40px;top:31.00px;width:.6px;height:8px;background:#e2e2e2"></div>
<div class="a" style="left:267.40px;top:31.00px;width:.6px;height:8px;background:#e2e2e2"></div>
<div class="a" style="left:296.50px;top:31.00px;width:.6px;height:8px;background:#e2e2e2"></div>
<div class="a" style="left:326.70px;top:31.00px;width:.6px;height:8px;background:#e2e2e2"></div>
<div class="a" style="left:461.80px;top:31.00px;width:.6px;height:8px;background:#e2e2e2"></div>
<div class="a" style="left:6.00px;top:42.00px;width:470px;height:.8px;background:#e3e3e3"></div>
<div class="a nw" style="left:28.60px;top:48.10px;font-size:6.3px;color:#474747">mds_stores</div>
<div class="a nw" style="left:155.30px;top:48.10px;width:60px;text-align:right;font-size:6.3px;color:#474747">8.58 GB</div>
<div class="a nw" style="left:196.30px;top:48.10px;width:60px;text-align:right;font-size:6.3px;color:#474747">7</div>
<div class="a nw" style="left:231.30px;top:48.10px;width:60px;text-align:right;font-size:6.3px;color:#474747">126</div>
<div class="a nw" style="left:261.30px;top:48.10px;width:60px;text-align:right;font-size:6.3px;color:#474747">789</div>
<div class="a nw" style="left:333.00px;top:48.10px;font-size:6.3px;color:#474747">_mds_stores</div>
<div class="a" style="left:6.00px;top:58.57px;width:457px;height:12.4px;border-radius:4px;background:#f4f4f4"></div>
<div class="a nw" style="left:28.60px;top:60.87px;font-size:6.3px;color:#474747">Virtual Machine Service for Docker</div>
<div class="a nw" style="left:155.30px;top:60.87px;width:60px;text-align:right;font-size:6.3px;color:#474747">3.87 GB</div>
<div class="a nw" style="left:196.30px;top:60.87px;width:60px;text-align:right;font-size:6.3px;color:#474747">21</div>
<div class="a nw" style="left:231.30px;top:60.87px;width:60px;text-align:right;font-size:6.3px;color:#474747">94</div>
<div class="a nw" style="left:261.30px;top:60.87px;width:60px;text-align:right;font-size:6.3px;color:#474747">31005</div>
<div class="a nw" style="left:333.00px;top:60.87px;font-size:6.3px;color:#474747">champion.trader</div>
<div class="a nw" style="left:28.60px;top:73.64px;font-size:6.3px;color:#474747">Microsoft.CodeAnalysis.LanguageServer</div>
<div class="a nw" style="left:155.30px;top:73.64px;width:60px;text-align:right;font-size:6.3px;color:#474747">1.10 GB</div>
<div class="a nw" style="left:196.30px;top:73.64px;width:60px;text-align:right;font-size:6.3px;color:#474747">40</div>
<div class="a nw" style="left:231.30px;top:73.64px;width:60px;text-align:right;font-size:6.3px;color:#474747">135</div>
<div class="a nw" style="left:261.30px;top:73.64px;width:60px;text-align:right;font-size:6.3px;color:#474747">35558</div>
<div class="a nw" style="left:333.00px;top:73.64px;font-size:6.3px;color:#474747">champion.trader</div>
<div class="a" style="left:6.00px;top:84.11px;width:457px;height:12.4px;border-radius:4px;background:#f4f4f4"></div>
<div class="a nw" style="left:28.60px;top:86.41px;font-size:6.3px;color:#474747">Code Helper (Renderer)</div>
<div class="a nw" style="left:155.30px;top:86.41px;width:60px;text-align:right;font-size:6.3px;color:#474747">806.1 MB</div>
<div class="a nw" style="left:196.30px;top:86.41px;width:60px;text-align:right;font-size:6.3px;color:#474747">22</div>
<div class="a nw" style="left:231.30px;top:86.41px;width:60px;text-align:right;font-size:6.3px;color:#474747">380</div>
<div class="a nw" style="left:261.30px;top:86.41px;width:60px;text-align:right;font-size:6.3px;color:#474747">34888</div>
<div class="a nw" style="left:333.00px;top:86.41px;font-size:6.3px;color:#474747">champion.trader</div>
<div class="a nw" style="left:28.60px;top:99.18px;font-size:6.3px;color:#474747">Code Helper (Plugin)</div>
<div class="a nw" style="left:155.30px;top:99.18px;width:60px;text-align:right;font-size:6.3px;color:#474747">782.3 MB</div>
<div class="a nw" style="left:196.30px;top:99.18px;width:60px;text-align:right;font-size:6.3px;color:#474747">24</div>
<div class="a nw" style="left:231.30px;top:99.18px;width:60px;text-align:right;font-size:6.3px;color:#474747">125</div>
<div class="a nw" style="left:261.30px;top:99.18px;width:60px;text-align:right;font-size:6.3px;color:#474747">34928</div>
<div class="a nw" style="left:333.00px;top:99.18px;font-size:6.3px;color:#474747">champion.trader</div>
<div class="a" style="left:6.00px;top:109.65px;width:457px;height:12.4px;border-radius:4px;background:#f4f4f4"></div>
<div class="a nw" style="left:28.60px;top:111.95px;font-size:6.3px;color:#474747">Microsoft.VisualStudio.Code.ServiceHost</div>
<div class="a nw" style="left:155.30px;top:111.95px;width:60px;text-align:right;font-size:6.3px;color:#474747">639.8 MB</div>
<div class="a nw" style="left:196.30px;top:111.95px;width:60px;text-align:right;font-size:6.3px;color:#474747">28</div>
<div class="a nw" style="left:231.30px;top:111.95px;width:60px;text-align:right;font-size:6.3px;color:#474747">107</div>
<div class="a nw" style="left:261.30px;top:111.95px;width:60px;text-align:right;font-size:6.3px;color:#474747">35857</div>
<div class="a nw" style="left:333.00px;top:111.95px;font-size:6.3px;color:#474747">champion.trader</div>
<div class="a nw" style="left:28.60px;top:124.72px;font-size:6.3px;color:#474747">Code Helper (Plugin)</div>
<div class="a nw" style="left:155.30px;top:124.72px;width:60px;text-align:right;font-size:6.3px;color:#474747">586.1 MB</div>
<div class="a nw" style="left:196.30px;top:124.72px;width:60px;text-align:right;font-size:6.3px;color:#474747">10</div>
<div class="a nw" style="left:231.30px;top:124.72px;width:60px;text-align:right;font-size:6.3px;color:#474747">68</div>
<div class="a nw" style="left:261.30px;top:124.72px;width:60px;text-align:right;font-size:6.3px;color:#474747">40322</div>
<div class="a nw" style="left:333.00px;top:124.72px;font-size:6.3px;color:#474747">champion.trader</div>
<div class="a" style="left:6.00px;top:135.19px;width:457px;height:12.4px;border-radius:4px;background:#f4f4f4"></div>
<div class="a nw" style="left:28.60px;top:137.49px;font-size:6.3px;color:#474747">Code Helper (Plugin)</div>
<div class="a nw" style="left:155.30px;top:137.49px;width:60px;text-align:right;font-size:6.3px;color:#474747">437.1 MB</div>
<div class="a nw" style="left:196.30px;top:137.49px;width:60px;text-align:right;font-size:6.3px;color:#474747">22</div>
<div class="a nw" style="left:231.30px;top:137.49px;width:60px;text-align:right;font-size:6.3px;color:#474747">119</div>
<div class="a nw" style="left:261.30px;top:137.49px;width:60px;text-align:right;font-size:6.3px;color:#474747">34929</div>
<div class="a nw" style="left:333.00px;top:137.49px;font-size:6.3px;color:#474747">champion.trader</div>
<div class="a nw" style="left:28.60px;top:150.26px;font-size:6.3px;color:#474747">Spotlight</div>
<div class="a nw" style="left:155.30px;top:150.26px;width:60px;text-align:right;font-size:6.3px;color:#474747">357.7 MB</div>
<div class="a nw" style="left:196.30px;top:150.26px;width:60px;text-align:right;font-size:6.3px;color:#474747">8</div>
<div class="a nw" style="left:231.30px;top:150.26px;width:60px;text-align:right;font-size:6.3px;color:#474747">689</div>
<div class="a nw" style="left:261.30px;top:150.26px;width:60px;text-align:right;font-size:6.3px;color:#474747">1606</div>
<div class="a nw" style="left:333.00px;top:150.26px;font-size:6.3px;color:#474747">champion.trader</div>
<div class="a" style="left:6.00px;top:160.73px;width:457px;height:12.4px;border-radius:4px;background:#f4f4f4"></div>
<div class="a nw" style="left:28.60px;top:163.03px;font-size:6.3px;color:#474747">WindowServer</div>
<div class="a nw" style="left:155.30px;top:163.03px;width:60px;text-align:right;font-size:6.3px;color:#474747">336.6 MB</div>
<div class="a nw" style="left:196.30px;top:163.03px;width:60px;text-align:right;font-size:6.3px;color:#474747">23</div>
<div class="a nw" style="left:231.30px;top:163.03px;width:60px;text-align:right;font-size:6.3px;color:#474747">3,449</div>
<div class="a nw" style="left:261.30px;top:163.03px;width:60px;text-align:right;font-size:6.3px;color:#474747">601</div>
<div class="a nw" style="left:333.00px;top:163.03px;font-size:6.3px;color:#474747">_windowserver</div>
<div class="a nw" style="left:28.60px;top:175.80px;font-size:6.3px;color:#474747">CloudflareWARP</div>
<div class="a nw" style="left:155.30px;top:175.80px;width:60px;text-align:right;font-size:6.3px;color:#474747">323.3 MB</div>
<div class="a nw" style="left:196.30px;top:175.80px;width:60px;text-align:right;font-size:6.3px;color:#474747">30</div>
<div class="a nw" style="left:231.30px;top:175.80px;width:60px;text-align:right;font-size:6.3px;color:#474747">143</div>
<div class="a nw" style="left:261.30px;top:175.80px;width:60px;text-align:right;font-size:6.3px;color:#474747">50408</div>
<div class="a nw" style="left:333.00px;top:175.80px;font-size:6.3px;color:#474747">root</div>
<div class="a" style="left:6.00px;top:186.27px;width:457px;height:12.4px;border-radius:4px;background:#f4f4f4"></div>
<div class="a nw" style="left:28.60px;top:188.57px;font-size:6.3px;color:#474747">Code Helper (Renderer)</div>
<div class="a nw" style="left:155.30px;top:188.57px;width:60px;text-align:right;font-size:6.3px;color:#474747">315.1 MB</div>
<div class="a nw" style="left:196.30px;top:188.57px;width:60px;text-align:right;font-size:6.3px;color:#474747">21</div>
<div class="a nw" style="left:231.30px;top:188.57px;width:60px;text-align:right;font-size:6.3px;color:#474747">293</div>
<div class="a nw" style="left:261.30px;top:188.57px;width:60px;text-align:right;font-size:6.3px;color:#474747">34890</div>
<div class="a nw" style="left:333.00px;top:188.57px;font-size:6.3px;color:#474747">champion.trader</div>
<div class="a nw" style="left:28.60px;top:201.34px;font-size:6.3px;color:#474747">VBCSCompiler</div>
<div class="a nw" style="left:155.30px;top:201.34px;width:60px;text-align:right;font-size:6.3px;color:#474747">290.8 MB</div>
<div class="a nw" style="left:196.30px;top:201.34px;width:60px;text-align:right;font-size:6.3px;color:#474747">24</div>
<div class="a nw" style="left:231.30px;top:201.34px;width:60px;text-align:right;font-size:6.3px;color:#474747">73</div>
<div class="a nw" style="left:261.30px;top:201.34px;width:60px;text-align:right;font-size:6.3px;color:#474747">34906</div>
<div class="a nw" style="left:333.00px;top:201.34px;font-size:6.3px;color:#474747">champion.trader</div>
<div class="a" style="left:6.00px;top:211.81px;width:457px;height:12.4px;border-radius:4px;background:#f4f4f4"></div>
<div class="a nw" style="left:28.60px;top:214.11px;font-size:6.3px;color:#474747">Code Helper (Plugin)</div>
<div class="a nw" style="left:155.30px;top:214.11px;width:60px;text-align:right;font-size:6.3px;color:#474747">260.8 MB</div>
<div class="a nw" style="left:196.30px;top:214.11px;width:60px;text-align:right;font-size:6.3px;color:#474747">16</div>
<div class="a nw" style="left:231.30px;top:214.11px;width:60px;text-align:right;font-size:6.3px;color:#474747">71</div>
<div class="a nw" style="left:261.30px;top:214.11px;width:60px;text-align:right;font-size:6.3px;color:#474747">35786</div>
<div class="a nw" style="left:333.00px;top:214.11px;font-size:6.3px;color:#474747">champion.trader</div>
<div class="a nw" style="left:28.60px;top:226.88px;font-size:6.3px;color:#474747">Code Helper (Plugin)</div>
<div class="a nw" style="left:155.30px;top:226.88px;width:60px;text-align:right;font-size:6.3px;color:#474747">260.0 MB</div>
<div class="a nw" style="left:196.30px;top:226.88px;width:60px;text-align:right;font-size:6.3px;color:#474747">16</div>
<div class="a nw" style="left:231.30px;top:226.88px;width:60px;text-align:right;font-size:6.3px;color:#474747">71</div>
<div class="a nw" style="left:261.30px;top:226.88px;width:60px;text-align:right;font-size:6.3px;color:#474747">35565</div>
<div class="a nw" style="left:333.00px;top:226.88px;font-size:6.3px;color:#474747">champion.trader</div>
<div class="a" style="left:6.00px;top:237.35px;width:457px;height:12.4px;border-radius:4px;background:#f4f4f4"></div>
<div class="a nw" style="left:28.60px;top:239.65px;font-size:6.3px;color:#474747">Docker</div>
<div class="a nw" style="left:155.30px;top:239.65px;width:60px;text-align:right;font-size:6.3px;color:#474747">226.0 MB</div>
<div class="a nw" style="left:196.30px;top:239.65px;width:60px;text-align:right;font-size:6.3px;color:#474747">74</div>
<div class="a nw" style="left:231.30px;top:239.65px;width:60px;text-align:right;font-size:6.3px;color:#474747">348</div>
<div class="a nw" style="left:261.30px;top:239.65px;width:60px;text-align:right;font-size:6.3px;color:#474747">30946</div>
<div class="a nw" style="left:333.00px;top:239.65px;font-size:6.3px;color:#474747">champion.trader</div>
<div class="a nw" style="left:28.60px;top:252.42px;font-size:6.3px;color:#474747">claude</div>
<div class="a nw" style="left:155.30px;top:252.42px;width:60px;text-align:right;font-size:6.3px;color:#474747">210.2 MB</div>
<div class="a nw" style="left:196.30px;top:252.42px;width:60px;text-align:right;font-size:6.3px;color:#474747">7</div>
<div class="a nw" style="left:231.30px;top:252.42px;width:60px;text-align:right;font-size:6.3px;color:#474747">33</div>
<div class="a nw" style="left:261.30px;top:252.42px;width:60px;text-align:right;font-size:6.3px;color:#474747">35350</div>
<div class="a nw" style="left:333.00px;top:252.42px;font-size:6.3px;color:#474747">champion.trader</div>
<div class="a" style="left:6.00px;top:262.89px;width:457px;height:12.4px;border-radius:4px;background:#f4f4f4"></div>
<div class="a nw" style="left:28.60px;top:265.19px;font-size:6.3px;color:#474747">claude</div>
<div class="a nw" style="left:155.30px;top:265.19px;width:60px;text-align:right;font-size:6.3px;color:#474747">209.3 MB</div>
<div class="a nw" style="left:196.30px;top:265.19px;width:60px;text-align:right;font-size:6.3px;color:#474747">6</div>
<div class="a nw" style="left:231.30px;top:265.19px;width:60px;text-align:right;font-size:6.3px;color:#474747">32</div>
<div class="a nw" style="left:261.30px;top:265.19px;width:60px;text-align:right;font-size:6.3px;color:#474747">35434</div>
<div class="a nw" style="left:333.00px;top:265.19px;font-size:6.3px;color:#474747">champion.trader</div>
<div class="a nw" style="left:28.60px;top:277.96px;font-size:6.3px;color:#474747">vsdbg-ui</div>
<div class="a nw" style="left:155.30px;top:277.96px;width:60px;text-align:right;font-size:6.3px;color:#474747">187.5 MB</div>
<div class="a nw" style="left:196.30px;top:277.96px;width:60px;text-align:right;font-size:6.3px;color:#474747">24</div>
<div class="a nw" style="left:231.30px;top:277.96px;width:60px;text-align:right;font-size:6.3px;color:#474747">71</div>
<div class="a nw" style="left:261.30px;top:277.96px;width:60px;text-align:right;font-size:6.3px;color:#474747">47331</div>
<div class="a nw" style="left:333.00px;top:277.96px;font-size:6.3px;color:#474747">champion.trader</div>
<div class="a" style="left:15.00px;top:60.77px;width:8px;height:8px;border-radius:50%;background:radial-gradient(circle at 40% 40%,#e8e8e8,#c8c8c8)"></div>
<div class="a" style="left:15.00px;top:150.16px;width:8px;height:8px;border-radius:2px;background:linear-gradient(#5bb8ff,#1670e8)"></div>
<svg class="a" style="left:16.00px;top:151.16px" width="6" height="6" viewBox="0 0 6 6"><circle cx="2.6" cy="2.6" r="1.7" fill="none" stroke="#fff" stroke-width=".8"/><path d="M3.8 3.8l1.5 1.5" stroke="#fff" stroke-width=".8"/></svg>
<div class="a" style="left:15.00px;top:239.55px;width:8px;height:8px;border-radius:2px;background:linear-gradient(#4fb0ff,#1a7be0)"></div>
<div class="a" style="left:16.50px;top:242.55px;width:5px;height:2.5px;border-radius:0 0 2px 2px;background:#fff"></div>
<div class="a" style="left:467.50px;top:42.00px;width:9px;height:248px;background:#fbfbfb;border-left:.6px solid #f0f0f0"></div>
<div class="a" style="left:469.80px;top:44.00px;width:5px;height:10px;border-radius:2.5px;background:#9e9e9e"></div>
<div class="a" style="left:0.00px;top:289.50px;width:477px;height:.8px;background:#e3e3e3"></div>
<div class="a" style="left:84.10px;top:296.50px;width:308.5px;height:48.5px;border-radius:4px;border:.8px solid #dedede;background:#fff"></div>
<div class="a nw" style="left:109.80px;top:300.20px;font-size:4.9px;color:#8a8a8a;letter-spacing:.1px">MEMORY PRESSURE</div>
<div class="a" style="left:89.00px;top:309.30px;width:93px;height:.6px;background:#ececec"></div>
<div class="a" style="left:84.90px;top:336.00px;width:99.4px;height:7.2px;background:linear-gradient(90deg,#9ee29b 0%,#a4e5a1 70%,#b8ebb5 100%)"></div>
<div class="a" style="left:187.30px;top:296.50px;width:.8px;height:48.5px;background:#e3e3e3"></div>
<div class="a" style="left:289.00px;top:296.50px;width:.8px;height:48.5px;background:#e3e3e3"></div>
<div class="a nw" style="left:192.60px;top:300.50px;font-size:6.25px;color:#2a2a2a">Physical Memory:</div>
<div class="a nw" style="left:223.00px;top:300.50px;width:60px;text-align:right;font-size:6.25px;color:#2a2a2a">32.00 GB</div>
<div class="a nw" style="left:192.60px;top:311.10px;font-size:6.25px;color:#2a2a2a">Memory Used:</div>
<div class="a nw" style="left:223.00px;top:311.10px;width:60px;text-align:right;font-size:6.25px;color:#2a2a2a">18.06 GB</div>
<div class="a nw" style="left:192.60px;top:321.80px;font-size:6.25px;color:#2a2a2a">Cached Files:</div>
<div class="a nw" style="left:223.00px;top:321.80px;width:60px;text-align:right;font-size:6.25px;color:#2a2a2a">5.87 GB</div>
<div class="a nw" style="left:192.60px;top:332.40px;font-size:6.25px;color:#2a2a2a">Swap Used:</div>
<div class="a nw" style="left:223.00px;top:332.40px;width:60px;text-align:right;font-size:6.25px;color:#2a2a2a">6.12 GB</div>
<div class="a" style="left:191.00px;top:309.70px;width:94px;height:.7px;background:#9a9a9a"></div>
<div class="a" style="left:191.00px;top:320.40px;width:94px;height:.6px;background:#e2e2e2"></div>
<div class="a" style="left:191.00px;top:331.00px;width:94px;height:.6px;background:#e2e2e2"></div>
<div class="a nw" style="left:296.30px;top:307.10px;font-size:6.25px;color:#2a2a2a">App Memory:</div>
<div class="a nw" style="left:326.00px;top:307.10px;width:60px;text-align:right;font-size:6.25px;color:#2a2a2a">10.70 GB</div>
<div class="a nw" style="left:296.30px;top:316.70px;font-size:6.25px;color:#2a2a2a">Wired Memory:</div>
<div class="a nw" style="left:326.00px;top:316.70px;width:60px;text-align:right;font-size:6.25px;color:#2a2a2a">2.34 GB</div>
<div class="a nw" style="left:296.30px;top:326.20px;font-size:6.25px;color:#2a2a2a">Compressed:</div>
<div class="a nw" style="left:326.00px;top:326.20px;width:60px;text-align:right;font-size:6.25px;color:#2a2a2a">4.23 GB</div>
</div>

<div id="dock" class="a"></div>
<div class="a" style="left:52.70px;top:533.40px;width:31px;height:31px;border-radius:7.5px;background:#1e8ff6;"></div>
<svg class="a" style="left:52.70px;top:533.4px" width="31" height="31" viewBox="0 0 31 31"><defs><clipPath id="fc"><rect width="31" height="31" rx="7.5"/></clipPath></defs><g clip-path="url(#fc)"><rect width="31" height="31" fill="url(#fg)"/><linearGradient id="fg" x1="0" y1="0" x2="0" y2="1"><stop offset="0" stop-color="#22b4fb"/><stop offset="1" stop-color="#1a6ff0"/></linearGradient><path d="M17 0C15 5 13.5 10 13.5 16.5H17C16.7 21 17 26 18 31H31V0z" fill="#e3ecf6"/><path d="M6.5 20.5c5 4 13 4 18 0" fill="none" stroke="#0b2a55" stroke-width="1.2"/><path d="M9.5 10.5v3M22 10.5v3" stroke="#0b2a55" stroke-width="1.4"/></g></svg>
<div class="a" style="left:93.20px;top:533.40px;width:31px;height:31px;border-radius:7.5px;background:linear-gradient(#5ef578,#25c23d);"></div>
<svg class="a" style="left:93.20px;top:533.4px" width="31" height="31" viewBox="0 0 31 31"><path d="M15.5 5.5a10 10 0 0 0-8.6 15.1L5.5 25.5l5-1.3A10 10 0 1 0 15.5 5.5z" fill="none" stroke="#fff" stroke-width="2"/><path d="M11.5 11.5c0 4 3.5 8 8 8.5l1.5-1.8-2.2-1.2-1 .9c-1.4-.6-2.7-1.9-3.3-3.3l.9-1-1.2-2.2z" fill="#fff"/></svg>
<div class="a" style="left:133.70px;top:533.40px;width:31px;height:31px;border-radius:7.5px;background:linear-gradient(#ffffff,#eeeeee);"></div>
<div class="a" style="left:138.70px;top:537.50px;width:21px;height:5px;border-radius:2.5px;background:#c9c9c9;"></div>
<div class="a" style="left:140.20px;top:546.00px;width:4.8px;height:4.8px;border-radius:1.2px;background:#f7a44a;"></div>
<div class="a" style="left:147.20px;top:546.00px;width:4.8px;height:4.8px;border-radius:1.2px;background:#f3609a;"></div>
<div class="a" style="left:154.20px;top:546.00px;width:4.8px;height:4.8px;border-radius:1.2px;background:#45c9a5;"></div>
<div class="a" style="left:140.20px;top:552.50px;width:4.8px;height:4.8px;border-radius:1.2px;background:#c58ef0;"></div>
<div class="a" style="left:147.20px;top:552.50px;width:4.8px;height:4.8px;border-radius:1.2px;background:#5cb6f5;"></div>
<div class="a" style="left:154.20px;top:552.50px;width:4.8px;height:4.8px;border-radius:1.2px;background:#b0b0b0;"></div>
<div class="a" style="left:174.20px;top:533.40px;width:31px;height:31px;border-radius:7.5px;background:linear-gradient(#f3f5f8,#e2e6ec);"></div>
<svg class="a" style="left:174.20px;top:533.4px" width="31" height="31" viewBox="0 0 31 31"><g fill="#3a6ea5"><ellipse cx="8.3" cy="11.5" rx="4" ry="6.3" transform="rotate(-12 8.3 11.5)"/><ellipse cx="23" cy="11.5" rx="4" ry="6.3" transform="rotate(12 23 11.5)"/><path d="M10 6.5c3-1.5 8-1.5 11 0 1 3 .5 8-2 10.5l-.5 9c0 1.2-.8 1.6-1.7 1.6h-1.2c-.9 0-1.6-.5-1.6-1.6l-.5-9C10.5 15 9 9.5 10 6.5z"/></g><path d="M12 8.5c-.6 3-.2 6 1.5 8M19.5 8.5c.6 3 .2 6-1.5 8M10.5 19.5h2M19 19.5h2" fill="none" stroke="#cfe0f2" stroke-width=".6"/></svg>
<div class="a" style="left:214.70px;top:533.40px;width:31px;height:31px;border-radius:7.5px;background:#0d0d0d;"></div>
<svg class="a" style="left:214.70px;top:533.4px" width="31" height="31" viewBox="0 0 31 31"><path d="M4 9.8h9.6v12.4H8.8v-8.2H4z" fill="#f2f2f2"/><circle cx="17.4" cy="12.2" r="2.4" fill="#f2f2f2"/><path d="M21.4 9.8h5.6l-5.4 12.4h-5.3z" fill="#f2f2f2"/></svg>
<div class="a" style="left:255.20px;top:533.40px;width:31px;height:31px;border-radius:7.5px;background:#f4f4f4;"></div>
<div class="a" style="left:258.70px;top:536.9px;width:24px;height:24px;border-radius:50%;background:linear-gradient(#3aa9e6,#1e88d0)"></div>
<svg class="a" style="left:255.20px;top:533.4px" width="31" height="31" viewBox="0 0 31 31"><path d="M8 15.5l14-5.5-2.5 12-4-3-2 2 .3-3.3L20 12l-8.5 5.2z" fill="#fff"/></svg>
<div class="a" style="left:295.70px;top:533.40px;width:31px;height:31px;border-radius:7.5px;background:linear-gradient(#dcdcdc,#b9b9b9);"></div>
<div class="a" style="left:300.70px;top:544.00px;width:21px;height:12px;border-radius:3px;background:#5b5b5b;"></div>
<div class="a" style="left:304.70px;top:539.00px;width:13px;height:6px;border-radius:1.5px;background:#777;"></div>
<div class="a" style="left:305.20px;top:551.00px;width:12px;height:9px;border-radius:1px;background:#f4f4f4;"></div>
<div class="a" style="left:347.20px;top:533.4px;width:8px;height:31px;border-radius:1.5px;background:repeating-linear-gradient(#1c3a44 0 1.4px,#0c1a20 1.4px 2.6px);border:.7px solid #2b4d58"></div>
<div class="a" style="left:348.00px;top:558px;width:6.4px;height:5px;background:#4db0d8"></div>
<div class="a" style="left:376.70px;top:533.40px;width:31px;height:31px;border-radius:7.5px;background:linear-gradient(#ffd22e 0,#ffcb1f 7px,#fffdf5 7px,#fbf8ee 100%);"></div>
<div class="a" style="left:380.70px;top:546px;width:23px;height:.7px;background:#cfcfcf"></div>
<div class="a" style="left:380.70px;top:553px;width:23px;height:.7px;background:#cfcfcf"></div>
<div class="a" style="left:380.70px;top:560px;width:23px;height:.7px;background:#cfcfcf"></div>
<div class="a" style="left:417.20px;top:533.40px;width:31px;height:31px;border-radius:7.5px;background:linear-gradient(#2f2f2f,#151515);box-shadow:inset 0 0 0 .7px #555"></div>
<div class="a nw mono" style="left:421.20px;top:537px;font-size:8px;color:#fff">&gt;_</div>
<div class="a" style="left:457.70px;top:533.40px;width:31px;height:31px;border-radius:7.5px;background:linear-gradient(#2fa3f5,#1d8ef0);"></div>
<svg class="a" style="left:457.70px;top:533.4px" width="31" height="31" viewBox="0 0 31 31"><path d="M4.5 16h19c1-1.5 2.5-2 3.5-1.5-.3 1.3-1.2 2-2 2.2-1.5 4.5-5.5 7-11 7-5.5 0-8.5-3-9.5-7.7z" fill="#fff"/><g fill="#fff"><rect x="7" y="13" width="2.6" height="2.3"/><rect x="10" y="13" width="2.6" height="2.3"/><rect x="13" y="13" width="2.6" height="2.3"/><rect x="16" y="13" width="2.6" height="2.3"/><rect x="10" y="10.3" width="2.6" height="2.3"/><rect x="13" y="10.3" width="2.6" height="2.3"/><rect x="16" y="10.3" width="2.6" height="2.3"/><rect x="16" y="7.6" width="2.6" height="2.3"/></g></svg>
<div class="a" style="left:498.20px;top:533.40px;width:31px;height:31px;border-radius:7.5px;background:linear-gradient(#fafafa,#efefef);"></div>
<svg class="a" style="left:498.20px;top:533.4px" width="31" height="31" viewBox="0 0 31 31"><g fill="none" stroke="#141414" stroke-width="1.15"><rect x="12.6" y="4.6" width="5.8" height="12" rx="2.9" transform="rotate(0 15.5 15.5) rotate(52 15.5 10.6)"/><rect x="12.6" y="4.6" width="5.8" height="12" rx="2.9" transform="rotate(60 15.5 15.5) rotate(52 15.5 10.6)"/><rect x="12.6" y="4.6" width="5.8" height="12" rx="2.9" transform="rotate(120 15.5 15.5) rotate(52 15.5 10.6)"/><rect x="12.6" y="4.6" width="5.8" height="12" rx="2.9" transform="rotate(180 15.5 15.5) rotate(52 15.5 10.6)"/><rect x="12.6" y="4.6" width="5.8" height="12" rx="2.9" transform="rotate(240 15.5 15.5) rotate(52 15.5 10.6)"/><rect x="12.6" y="4.6" width="5.8" height="12" rx="2.9" transform="rotate(300 15.5 15.5) rotate(52 15.5 10.6)"/></g></svg>
<div class="a" style="left:538.70px;top:533.40px;width:31px;height:31px;border-radius:7.5px;background:#fafafa;"></div>
<svg class="a" style="left:538.70px;top:533.4px" width="31" height="31" viewBox="0 0 31 31"><path d="M23.5 7.5L6 20.5M6 12.5l17.5 13" stroke="#1f7fd0" stroke-width="3.4" stroke-linecap="butt"/><path d="M20.5 6.2l3.8-1.6 3 1.5v19l-3 1.5-3.8-1.6z" fill="#2a9af0"/></svg>
<div class="a" style="left:579.20px;top:533.40px;width:31px;height:31px;border-radius:7.5px;background:#f4f4f4;"></div>
<div class="a" style="left:582.20px;top:536.4px;width:25px;height:25px;border-radius:50%;background:radial-gradient(circle,#5ec2ff,#1a73e0)"></div>
<svg class="a" style="left:579.20px;top:533.4px" width="31" height="31" viewBox="0 0 31 31"><path d="M22 9l-8 5 3 3z" fill="#ff3b30"/><path d="M9 22l5-8 3 3z" fill="#fff"/></svg>
<div class="a" style="left:619.70px;top:533.40px;width:31px;height:31px;border-radius:7.5px;background:#f7f7f7;"></div>
<div class="a" style="left:623.20px;top:536.9px;width:24px;height:24px;border-radius:50%;background:conic-gradient(from -30deg,#ea4335 0 120deg,#34a853 120deg 240deg,#fbbc05 240deg 360deg)"></div>
<div class="a" style="left:629.70px;top:543.4px;width:11px;height:11px;border-radius:50%;background:#1a73e8;border:2px solid #fff"></div>
<div class="a" style="left:665px;top:532px;width:.8px;height:34px;background:rgba(60,60,60,.35)"></div>
<div class="a" style="left:805.5px;top:532px;width:.8px;height:34px;background:rgba(60,60,60,.35)"></div>
<div class="a" style="left:679.00px;top:533.40px;width:31px;height:31px;border-radius:7.5px;background:linear-gradient(#9bd0ff,#3f8cf6);"></div>
<svg class="a" style="left:679.00px;top:533.4px" width="31" height="31" viewBox="0 0 31 31"><path d="M6 17c0-2 4-3.5 9.5-3.5S25 15 25 17l1.2 7.5c0 2-4.700 3.300-10.700 3.300S4.800 26.500 4.800 24.500z" fill="rgba(220,240,255,.45)"/><ellipse cx="15.5" cy="24" rx="5" ry="1.800" fill="rgba(255,255,255,.35)"/><path d="M7.800 7.500c0-1.800 3.500-3 7.700-3s7.700 1.200 7.700 3v6c0 1.800-3.500 3-7.700 3s-7.700-1.200-7.700-3z" fill="#1c1c1c"/><ellipse cx="15.5" cy="7.500" rx="7.700" ry="3" fill="#2a2a2a"/><ellipse cx="15.5" cy="7.600" rx="4.500" ry="1.800" fill="#5fb0dd"/></svg>
<div class="a" style="left:719.00px;top:533.40px;width:31px;height:31px;border-radius:7.5px;background:linear-gradient(#ffffff,#f0f0f0);"></div>
<div class="a nw" style="left:719.00px;top:535.8px;width:31px;text-align:center;font-size:6.8px;font-weight:bold;color:#f0443a">Sat</div>
<div class="a nw" style="left:719.00px;top:541px;width:31px;text-align:center;font-size:18.5px;color:#1e1e1e">7</div>
<div class="a" style="left:760.00px;top:533.40px;width:31px;height:31px;border-radius:7.5px;background:linear-gradient(#a0a0a0,#6f6f6f);"></div>
<svg class="a" style="left:760.00px;top:533.4px" width="31" height="31" viewBox="0 0 31 31"><circle cx="15.5" cy="15.5" r="11.300" fill="none" stroke="#ededed" stroke-width="2" stroke-dasharray="1.300 1.150"/><circle cx="15.5" cy="15.5" r="9.600" fill="none" stroke="#ededed" stroke-width="1.300"/><circle cx="15.5" cy="15.5" r="6.500" fill="none" stroke="#dcdcdc" stroke-width="1.100"/><path d="M15.500 15.500h8M15.500 15.500l-4 6.900M15.500 15.500l-4-6.900" stroke="#ededed" stroke-width="1.500"/><circle cx="15.500" cy="15.500" r="1.800" fill="#ededed"/></svg>
<div class="a" style="left:815.80px;top:539.60px;width:36.1px;height:18.3px;border-radius:1px;background:#fbfbfb;box-shadow:0 0 .8px rgba(0,0,0,.35)"></div>
<div class="a" style="left:818px;top:542px;width:10px;height:14px;background:repeating-linear-gradient(#d5d5d5 0 .6px,transparent .6px 2.2px)"></div>
<div class="a" style="left:830px;top:545px;width:12px;height:3px;background:repeating-linear-gradient(#dadada 0 .6px,transparent .6px 1.8px)"></div>
<div class="a" style="left:839.90px;top:554.20px;width:10.8px;height:11.7px;border-radius:2.8px;background:linear-gradient(#ffd22e 0 3.2px,#fbf8ee 3.2px);box-shadow:0 0 .6px rgba(0,0,0,.3)"></div>
<div class="a" style="left:856.50px;top:539.60px;width:36.5px;height:17.4px;border-radius:1px;background:linear-gradient(#3b6fd0 0 2.2px,#fafafa 2.2px);box-shadow:0 0 .8px rgba(0,0,0,.35)"></div>
<div class="a" style="left:860px;top:545px;width:28px;height:9px;background:repeating-linear-gradient(#dde3ee 0 .6px,transparent .6px 2.2px)"></div>
<div class="a" style="left:880.60px;top:554.60px;width:11.6px;height:11.6px;border-radius:2.8px;background:linear-gradient(#2fa3f5,#1d84e8);"></div>
<div class="a" style="left:882.6px;top:559.2px;width:7.6px;height:3.2px;border-radius:0 0 3px 3px;background:#fff"></div>
<div class="a" style="left:897.20px;top:536.00px;width:36.1px;height:26px;border-radius:1px;background:#fbfbfb;box-shadow:0 0 .8px rgba(0,0,0,.35)"></div>
<div class="a" style="left:899.5px;top:539px;width:19px;height:21px;background:repeating-linear-gradient(#c8c8c8 0 .6px,transparent .6px 1.9px);opacity:.9"></div>
<div class="a" style="left:921.50px;top:543.50px;width:6px;height:3.5px;border-radius:0.5px;background:#3f5a52;"></div>
<div class="a" style="left:921.50px;top:548.00px;width:6px;height:1.2px;border-radius:0.3px;background:#9aa;"></div>
<div class="a" style="left:921.30px;top:555.40px;width:10.8px;height:10.8px;border-radius:5.4px;background:radial-gradient(#5ec2ff,#1a73e0);box-shadow:0 0 0 .8px #fff"></div>
<div class="a" style="left:942px;top:534px;width:28px;height:30.5px;border-radius:2px 2px 5px 5px;background:linear-gradient(90deg,rgba(225,225,225,.55),rgba(190,190,190,.4));clip-path:polygon(0 0,100% 0,92% 100%,8% 100%)"></div>
<div class="a" style="left:941.5px;top:533.3px;width:29px;height:3px;border-radius:1.5px;background:rgba(240,240,240,.85)"></div>
<div class="a" style="left:67.1px;top:569.4px;width:1.8px;height:1.8px;border-radius:50%;background:#1a1a1a"></div>
<div class="a" style="left:350.9px;top:569.4px;width:1.8px;height:1.8px;border-radius:50%;background:#1a1a1a"></div>
<div class="a" style="left:391.4px;top:569.4px;width:1.8px;height:1.8px;border-radius:50%;background:#1a1a1a"></div>
<div class="a" style="left:431.9px;top:569.4px;width:1.8px;height:1.8px;border-radius:50%;background:#1a1a1a"></div>
<div class="a" style="left:472.4px;top:569.4px;width:1.8px;height:1.8px;border-radius:50%;background:#1a1a1a"></div>
<div class="a" style="left:553.4px;top:569.4px;width:1.8px;height:1.8px;border-radius:50%;background:#1a1a1a"></div>
<div class="a" style="left:593.9px;top:569.4px;width:1.8px;height:1.8px;border-radius:50%;background:#1a1a1a"></div>
<div class="a" style="left:634.4px;top:569.4px;width:1.8px;height:1.8px;border-radius:50%;background:#1a1a1a"></div>

</body></html>
